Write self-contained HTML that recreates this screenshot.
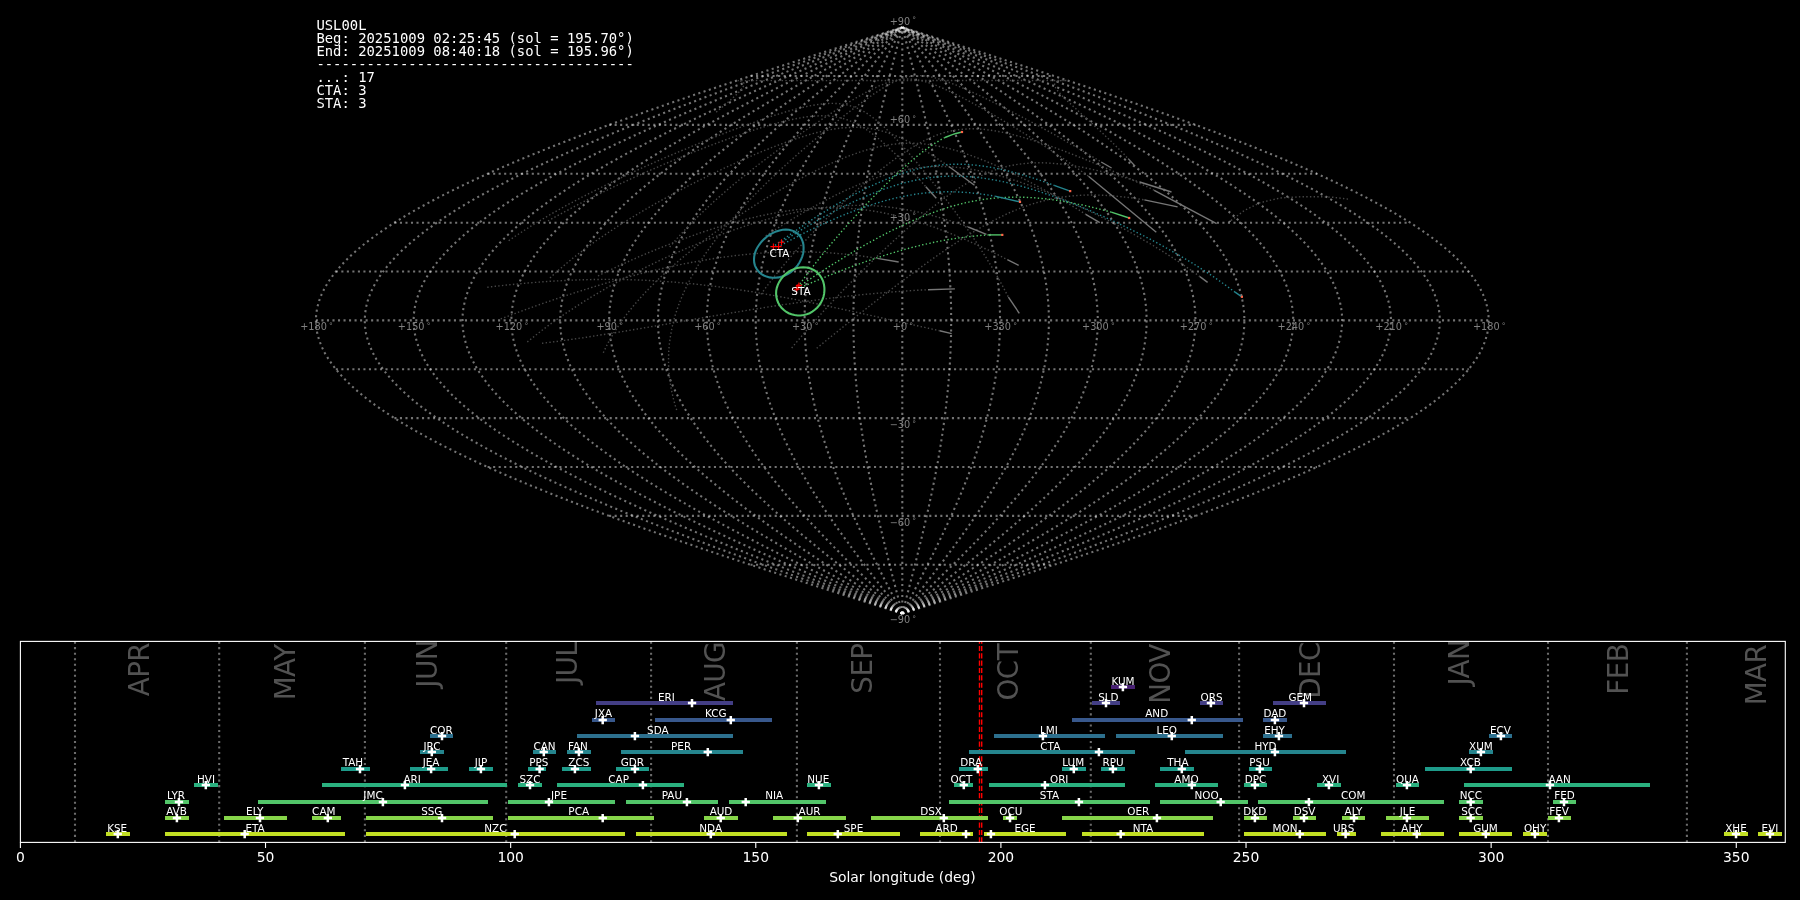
<!DOCTYPE html>
<html><head><meta charset="utf-8"><title>Shower association</title>
<style>
html,body{margin:0;padding:0;background:#000;}
body{width:1800px;height:900px;overflow:hidden;}
svg{display:block;will-change:transform;font-family:"DejaVu Sans","Liberation Sans",sans-serif;}
</style></head><body>
<svg width="1800" height="900" viewBox="0 0 1800 900">
<rect width="1800" height="900" fill="#000"/>
<g fill="none" stroke="#ffffff" stroke-opacity="0.45" stroke-width="2.08" stroke-dasharray="2.08 3.44">
<path d="M902.3 613.6 L922.8 607.1 L943.2 600.6 L963.6 594.1 L983.9 587.6 L1004.1 581.0 L1024.2 574.5 L1044.2 568.0 L1063.9 561.5 L1083.5 555.0 L1102.9 548.5 L1122.0 541.9 L1140.8 535.4 L1159.4 528.9 L1177.6 522.4 L1195.5 515.9 L1213.1 509.4 L1230.2 502.8 L1247.0 496.3 L1263.3 489.8 L1279.3 483.3 L1294.7 476.8 L1309.7 470.3 L1324.1 463.8 L1338.1 457.2 L1351.5 450.7 L1364.4 444.2 L1376.7 437.7 L1388.5 431.2 L1399.6 424.7 L1410.2 418.1 L1420.1 411.6 L1429.4 405.1 L1438.0 398.6 L1446.0 392.1 L1453.4 385.6 L1460.0 379.0 L1466.0 372.5 L1471.3 366.0 L1475.9 359.5 L1479.8 353.0 L1483.0 346.5 L1485.5 339.9 L1487.3 333.4 L1488.4 326.9 L1488.7 320.4 L1488.4 313.9 L1487.3 307.4 L1485.5 300.9 L1483.0 294.3 L1479.8 287.8 L1475.9 281.3 L1471.3 274.8 L1466.0 268.3 L1460.0 261.8 L1453.4 255.2 L1446.0 248.7 L1438.0 242.2 L1429.4 235.7 L1420.1 229.2 L1410.2 222.7 L1399.6 216.1 L1388.5 209.6 L1376.7 203.1 L1364.4 196.6 L1351.5 190.1 L1338.1 183.6 L1324.1 177.0 L1309.7 170.5 L1294.7 164.0 L1279.3 157.5 L1263.3 151.0 L1247.0 144.5 L1230.2 138.0 L1213.1 131.4 L1195.5 124.9 L1177.6 118.4 L1159.4 111.9 L1140.8 105.4 L1122.0 98.9 L1102.9 92.3 L1083.5 85.8 L1063.9 79.3 L1044.2 72.8 L1024.2 66.3 L1004.1 59.8 L983.9 53.2 L963.6 46.7 L943.2 40.2 L922.8 33.7 L902.3 27.2"/>
<path d="M902.3 613.6 L921.1 607.1 L939.8 600.6 L958.5 594.1 L977.1 587.6 L995.6 581.0 L1014.1 574.5 L1032.3 568.0 L1050.5 561.5 L1068.4 555.0 L1086.2 548.5 L1103.7 541.9 L1120.9 535.4 L1138.0 528.9 L1154.7 522.4 L1171.1 515.9 L1187.2 509.4 L1202.9 502.8 L1218.3 496.3 L1233.3 489.8 L1247.8 483.3 L1262.0 476.8 L1275.7 470.3 L1289.0 463.8 L1301.8 457.2 L1314.1 450.7 L1325.9 444.2 L1337.2 437.7 L1348.0 431.2 L1358.2 424.7 L1367.8 418.1 L1376.9 411.6 L1385.5 405.1 L1393.4 398.6 L1400.7 392.1 L1407.5 385.6 L1413.6 379.0 L1419.0 372.5 L1423.9 366.0 L1428.1 359.5 L1431.7 353.0 L1434.6 346.5 L1436.9 339.9 L1438.6 333.4 L1439.5 326.9 L1439.9 320.4 L1439.5 313.9 L1438.6 307.4 L1436.9 300.9 L1434.6 294.3 L1431.7 287.8 L1428.1 281.3 L1423.9 274.8 L1419.0 268.3 L1413.6 261.8 L1407.5 255.2 L1400.7 248.7 L1393.4 242.2 L1385.5 235.7 L1376.9 229.2 L1367.8 222.7 L1358.2 216.1 L1348.0 209.6 L1337.2 203.1 L1325.9 196.6 L1314.1 190.1 L1301.8 183.6 L1289.0 177.0 L1275.7 170.5 L1262.0 164.0 L1247.8 157.5 L1233.3 151.0 L1218.3 144.5 L1202.9 138.0 L1187.2 131.4 L1171.1 124.9 L1154.7 118.4 L1138.0 111.9 L1120.9 105.4 L1103.7 98.9 L1086.2 92.3 L1068.4 85.8 L1050.5 79.3 L1032.3 72.8 L1014.1 66.3 L995.6 59.8 L977.1 53.2 L958.5 46.7 L939.8 40.2 L921.1 33.7 L902.3 27.2"/>
<path d="M902.3 613.6 L919.4 607.1 L936.4 600.6 L953.4 594.1 L970.3 587.6 L987.2 581.0 L1003.9 574.5 L1020.5 568.0 L1037.0 561.5 L1053.3 555.0 L1069.4 548.5 L1085.4 541.9 L1101.1 535.4 L1116.5 528.9 L1131.7 522.4 L1146.7 515.9 L1161.3 509.4 L1175.6 502.8 L1189.6 496.3 L1203.2 489.8 L1216.4 483.3 L1229.3 476.8 L1241.8 470.3 L1253.8 463.8 L1265.5 457.2 L1276.7 450.7 L1287.4 444.2 L1297.7 437.7 L1307.5 431.2 L1316.7 424.7 L1325.5 418.1 L1333.8 411.6 L1341.5 405.1 L1348.7 398.6 L1355.4 392.1 L1361.5 385.6 L1367.1 379.0 L1372.1 372.5 L1376.5 366.0 L1380.3 359.5 L1383.6 353.0 L1386.2 346.5 L1388.3 339.9 L1389.8 333.4 L1390.7 326.9 L1391.0 320.4 L1390.7 313.9 L1389.8 307.4 L1388.3 300.9 L1386.2 294.3 L1383.6 287.8 L1380.3 281.3 L1376.5 274.8 L1372.1 268.3 L1367.1 261.8 L1361.5 255.2 L1355.4 248.7 L1348.7 242.2 L1341.5 235.7 L1333.8 229.2 L1325.5 222.7 L1316.7 216.1 L1307.5 209.6 L1297.7 203.1 L1287.4 196.6 L1276.7 190.1 L1265.5 183.6 L1253.8 177.0 L1241.8 170.5 L1229.3 164.0 L1216.4 157.5 L1203.2 151.0 L1189.6 144.5 L1175.6 138.0 L1161.3 131.4 L1146.7 124.9 L1131.7 118.4 L1116.5 111.9 L1101.1 105.4 L1085.4 98.9 L1069.4 92.3 L1053.3 85.8 L1037.0 79.3 L1020.5 72.8 L1003.9 66.3 L987.2 59.8 L970.3 53.2 L953.4 46.7 L936.4 40.2 L919.4 33.7 L902.3 27.2"/>
<path d="M902.3 613.6 L917.6 607.1 L933.0 600.6 L948.3 594.1 L963.5 587.6 L978.7 581.0 L993.7 574.5 L1008.7 568.0 L1023.5 561.5 L1038.2 555.0 L1052.7 548.5 L1067.1 541.9 L1081.2 535.4 L1095.1 528.9 L1108.8 522.4 L1122.2 515.9 L1135.4 509.4 L1148.2 502.8 L1160.8 496.3 L1173.1 489.8 L1185.0 483.3 L1196.6 476.8 L1207.8 470.3 L1218.7 463.8 L1229.2 457.2 L1239.2 450.7 L1248.9 444.2 L1258.1 437.7 L1266.9 431.2 L1275.3 424.7 L1283.2 418.1 L1290.6 411.6 L1297.6 405.1 L1304.1 398.6 L1310.1 392.1 L1315.6 385.6 L1320.6 379.0 L1325.1 372.5 L1329.1 366.0 L1332.5 359.5 L1335.4 353.0 L1337.8 346.5 L1339.7 339.9 L1341.1 333.4 L1341.9 326.9 L1342.1 320.4 L1341.9 313.9 L1341.1 307.4 L1339.7 300.9 L1337.8 294.3 L1335.4 287.8 L1332.5 281.3 L1329.1 274.8 L1325.1 268.3 L1320.6 261.8 L1315.6 255.2 L1310.1 248.7 L1304.1 242.2 L1297.6 235.7 L1290.6 229.2 L1283.2 222.7 L1275.3 216.1 L1266.9 209.6 L1258.1 203.1 L1248.9 196.6 L1239.2 190.1 L1229.2 183.6 L1218.7 177.0 L1207.8 170.5 L1196.6 164.0 L1185.0 157.5 L1173.1 151.0 L1160.8 144.5 L1148.2 138.0 L1135.4 131.4 L1122.2 124.9 L1108.8 118.4 L1095.1 111.9 L1081.2 105.4 L1067.1 98.9 L1052.7 92.3 L1038.2 85.8 L1023.5 79.3 L1008.7 72.8 L993.7 66.3 L978.7 59.8 L963.5 53.2 L948.3 46.7 L933.0 40.2 L917.6 33.7 L902.3 27.2"/>
<path d="M902.3 613.6 L915.9 607.1 L929.6 600.6 L943.2 594.1 L956.7 587.6 L970.2 581.0 L983.6 574.5 L996.9 568.0 L1010.1 561.5 L1023.1 555.0 L1036.0 548.5 L1048.8 541.9 L1061.3 535.4 L1073.7 528.9 L1085.8 522.4 L1097.8 515.9 L1109.5 509.4 L1120.9 502.8 L1132.1 496.3 L1143.0 489.8 L1153.6 483.3 L1163.9 476.8 L1173.9 470.3 L1183.5 463.8 L1192.8 457.2 L1201.8 450.7 L1210.4 444.2 L1218.6 437.7 L1226.4 431.2 L1233.9 424.7 L1240.9 418.1 L1247.5 411.6 L1253.7 405.1 L1259.5 398.6 L1264.8 392.1 L1269.7 385.6 L1274.1 379.0 L1278.1 372.5 L1281.6 366.0 L1284.7 359.5 L1287.3 353.0 L1289.5 346.5 L1291.1 339.9 L1292.3 333.4 L1293.0 326.9 L1293.3 320.4 L1293.0 313.9 L1292.3 307.4 L1291.1 300.9 L1289.5 294.3 L1287.3 287.8 L1284.7 281.3 L1281.6 274.8 L1278.1 268.3 L1274.1 261.8 L1269.7 255.2 L1264.8 248.7 L1259.5 242.2 L1253.7 235.7 L1247.5 229.2 L1240.9 222.7 L1233.9 216.1 L1226.4 209.6 L1218.6 203.1 L1210.4 196.6 L1201.8 190.1 L1192.8 183.6 L1183.5 177.0 L1173.9 170.5 L1163.9 164.0 L1153.6 157.5 L1143.0 151.0 L1132.1 144.5 L1120.9 138.0 L1109.5 131.4 L1097.8 124.9 L1085.8 118.4 L1073.7 111.9 L1061.3 105.4 L1048.8 98.9 L1036.0 92.3 L1023.1 85.8 L1010.1 79.3 L996.9 72.8 L983.6 66.3 L970.2 59.8 L956.7 53.2 L943.2 46.7 L929.6 40.2 L915.9 33.7 L902.3 27.2"/>
<path d="M902.3 613.6 L914.2 607.1 L926.2 600.6 L938.1 594.1 L949.9 587.6 L961.7 581.0 L973.4 574.5 L985.1 568.0 L996.6 561.5 L1008.0 555.0 L1019.3 548.5 L1030.4 541.9 L1041.4 535.4 L1052.3 528.9 L1062.9 522.4 L1073.3 515.9 L1083.6 509.4 L1093.6 502.8 L1103.4 496.3 L1112.9 489.8 L1122.2 483.3 L1131.2 476.8 L1139.9 470.3 L1148.4 463.8 L1156.5 457.2 L1164.4 450.7 L1171.9 444.2 L1179.1 437.7 L1185.9 431.2 L1192.4 424.7 L1198.6 418.1 L1204.3 411.6 L1209.8 405.1 L1214.8 398.6 L1219.5 392.1 L1223.8 385.6 L1227.6 379.0 L1231.1 372.5 L1234.2 366.0 L1236.9 359.5 L1239.2 353.0 L1241.1 346.5 L1242.5 339.9 L1243.6 333.4 L1244.2 326.9 L1244.4 320.4 L1244.2 313.9 L1243.6 307.4 L1242.5 300.9 L1241.1 294.3 L1239.2 287.8 L1236.9 281.3 L1234.2 274.8 L1231.1 268.3 L1227.6 261.8 L1223.8 255.2 L1219.5 248.7 L1214.8 242.2 L1209.8 235.7 L1204.3 229.2 L1198.6 222.7 L1192.4 216.1 L1185.9 209.6 L1179.1 203.1 L1171.9 196.6 L1164.4 190.1 L1156.5 183.6 L1148.4 177.0 L1139.9 170.5 L1131.2 164.0 L1122.2 157.5 L1112.9 151.0 L1103.4 144.5 L1093.6 138.0 L1083.6 131.4 L1073.3 124.9 L1062.9 118.4 L1052.3 111.9 L1041.4 105.4 L1030.4 98.9 L1019.3 92.3 L1008.0 85.8 L996.6 79.3 L985.1 72.8 L973.4 66.3 L961.7 59.8 L949.9 53.2 L938.1 46.7 L926.2 40.2 L914.2 33.7 L902.3 27.2"/>
<path d="M902.3 613.6 L912.5 607.1 L922.8 600.6 L932.9 594.1 L943.1 587.6 L953.2 581.0 L963.3 574.5 L973.2 568.0 L983.1 561.5 L992.9 555.0 L1002.6 548.5 L1012.1 541.9 L1021.6 535.4 L1030.8 528.9 L1040.0 522.4 L1048.9 515.9 L1057.7 509.4 L1066.3 502.8 L1074.7 496.3 L1082.8 489.8 L1090.8 483.3 L1098.5 476.8 L1106.0 470.3 L1113.2 463.8 L1120.2 457.2 L1126.9 450.7 L1133.4 444.2 L1139.5 437.7 L1145.4 431.2 L1151.0 424.7 L1156.2 418.1 L1161.2 411.6 L1165.8 405.1 L1170.2 398.6 L1174.2 392.1 L1177.8 385.6 L1181.2 379.0 L1184.2 372.5 L1186.8 366.0 L1189.1 359.5 L1191.1 353.0 L1192.7 346.5 L1193.9 339.9 L1194.8 333.4 L1195.3 326.9 L1195.5 320.4 L1195.3 313.9 L1194.8 307.4 L1193.9 300.9 L1192.7 294.3 L1191.1 287.8 L1189.1 281.3 L1186.8 274.8 L1184.2 268.3 L1181.2 261.8 L1177.8 255.2 L1174.2 248.7 L1170.2 242.2 L1165.8 235.7 L1161.2 229.2 L1156.2 222.7 L1151.0 216.1 L1145.4 209.6 L1139.5 203.1 L1133.4 196.6 L1126.9 190.1 L1120.2 183.6 L1113.2 177.0 L1106.0 170.5 L1098.5 164.0 L1090.8 157.5 L1082.8 151.0 L1074.7 144.5 L1066.3 138.0 L1057.7 131.4 L1048.9 124.9 L1040.0 118.4 L1030.8 111.9 L1021.6 105.4 L1012.1 98.9 L1002.6 92.3 L992.9 85.8 L983.1 79.3 L973.2 72.8 L963.3 66.3 L953.2 59.8 L943.1 53.2 L932.9 46.7 L922.8 40.2 L912.5 33.7 L902.3 27.2"/>
<path d="M902.3 613.6 L910.8 607.1 L919.3 600.6 L927.8 594.1 L936.3 587.6 L944.7 581.0 L953.1 574.5 L961.4 568.0 L969.7 561.5 L977.8 555.0 L985.9 548.5 L993.8 541.9 L1001.7 535.4 L1009.4 528.9 L1017.0 522.4 L1024.5 515.9 L1031.8 509.4 L1038.9 502.8 L1045.9 496.3 L1052.7 489.8 L1059.4 483.3 L1065.8 476.8 L1072.0 470.3 L1078.1 463.8 L1083.9 457.2 L1089.5 450.7 L1094.9 444.2 L1100.0 437.7 L1104.9 431.2 L1109.5 424.7 L1113.9 418.1 L1118.0 411.6 L1121.9 405.1 L1125.5 398.6 L1128.9 392.1 L1131.9 385.6 L1134.7 379.0 L1137.2 372.5 L1139.4 366.0 L1141.3 359.5 L1142.9 353.0 L1144.3 346.5 L1145.3 339.9 L1146.1 333.4 L1146.5 326.9 L1146.6 320.4 L1146.5 313.9 L1146.1 307.4 L1145.3 300.9 L1144.3 294.3 L1142.9 287.8 L1141.3 281.3 L1139.4 274.8 L1137.2 268.3 L1134.7 261.8 L1131.9 255.2 L1128.9 248.7 L1125.5 242.2 L1121.9 235.7 L1118.0 229.2 L1113.9 222.7 L1109.5 216.1 L1104.9 209.6 L1100.0 203.1 L1094.9 196.6 L1089.5 190.1 L1083.9 183.6 L1078.1 177.0 L1072.0 170.5 L1065.8 164.0 L1059.4 157.5 L1052.7 151.0 L1045.9 144.5 L1038.9 138.0 L1031.8 131.4 L1024.5 124.9 L1017.0 118.4 L1009.4 111.9 L1001.7 105.4 L993.8 98.9 L985.9 92.3 L977.8 85.8 L969.7 79.3 L961.4 72.8 L953.1 66.3 L944.7 59.8 L936.3 53.2 L927.8 46.7 L919.3 40.2 L910.8 33.7 L902.3 27.2"/>
<path d="M902.3 613.6 L909.1 607.1 L915.9 600.6 L922.7 594.1 L929.5 587.6 L936.2 581.0 L942.9 574.5 L949.6 568.0 L956.2 561.5 L962.7 555.0 L969.2 548.5 L975.5 541.9 L981.8 535.4 L988.0 528.9 L994.1 522.4 L1000.0 515.9 L1005.9 509.4 L1011.6 502.8 L1017.2 496.3 L1022.6 489.8 L1028.0 483.3 L1033.1 476.8 L1038.1 470.3 L1042.9 463.8 L1047.6 457.2 L1052.0 450.7 L1056.3 444.2 L1060.4 437.7 L1064.4 431.2 L1068.1 424.7 L1071.6 418.1 L1074.9 411.6 L1078.0 405.1 L1080.9 398.6 L1083.5 392.1 L1086.0 385.6 L1088.2 379.0 L1090.2 372.5 L1092.0 366.0 L1093.5 359.5 L1094.8 353.0 L1095.9 346.5 L1096.7 339.9 L1097.3 333.4 L1097.7 326.9 L1097.8 320.4 L1097.7 313.9 L1097.3 307.4 L1096.7 300.9 L1095.9 294.3 L1094.8 287.8 L1093.5 281.3 L1092.0 274.8 L1090.2 268.3 L1088.2 261.8 L1086.0 255.2 L1083.5 248.7 L1080.9 242.2 L1078.0 235.7 L1074.9 229.2 L1071.6 222.7 L1068.1 216.1 L1064.4 209.6 L1060.4 203.1 L1056.3 196.6 L1052.0 190.1 L1047.6 183.6 L1042.9 177.0 L1038.1 170.5 L1033.1 164.0 L1028.0 157.5 L1022.6 151.0 L1017.2 144.5 L1011.6 138.0 L1005.9 131.4 L1000.0 124.9 L994.1 118.4 L988.0 111.9 L981.8 105.4 L975.5 98.9 L969.2 92.3 L962.7 85.8 L956.2 79.3 L949.6 72.8 L942.9 66.3 L936.2 59.8 L929.5 53.2 L922.7 46.7 L915.9 40.2 L909.1 33.7 L902.3 27.2"/>
<path d="M902.3 613.6 L907.4 607.1 L912.5 600.6 L917.6 594.1 L922.7 587.6 L927.8 581.0 L932.8 574.5 L937.8 568.0 L942.7 561.5 L947.6 555.0 L952.4 548.5 L957.2 541.9 L961.9 535.4 L966.6 528.9 L971.1 522.4 L975.6 515.9 L980.0 509.4 L984.3 502.8 L988.5 496.3 L992.6 489.8 L996.5 483.3 L1000.4 476.8 L1004.1 470.3 L1007.8 463.8 L1011.3 457.2 L1014.6 450.7 L1017.8 444.2 L1020.9 437.7 L1023.8 431.2 L1026.6 424.7 L1029.3 418.1 L1031.7 411.6 L1034.1 405.1 L1036.2 398.6 L1038.2 392.1 L1040.1 385.6 L1041.7 379.0 L1043.2 372.5 L1044.6 366.0 L1045.7 359.5 L1046.7 353.0 L1047.5 346.5 L1048.1 339.9 L1048.6 333.4 L1048.8 326.9 L1048.9 320.4 L1048.8 313.9 L1048.6 307.4 L1048.1 300.9 L1047.5 294.3 L1046.7 287.8 L1045.7 281.3 L1044.6 274.8 L1043.2 268.3 L1041.7 261.8 L1040.1 255.2 L1038.2 248.7 L1036.2 242.2 L1034.1 235.7 L1031.7 229.2 L1029.3 222.7 L1026.6 216.1 L1023.8 209.6 L1020.9 203.1 L1017.8 196.6 L1014.6 190.1 L1011.3 183.6 L1007.8 177.0 L1004.1 170.5 L1000.4 164.0 L996.5 157.5 L992.6 151.0 L988.5 144.5 L984.3 138.0 L980.0 131.4 L975.6 124.9 L971.1 118.4 L966.6 111.9 L961.9 105.4 L957.2 98.9 L952.4 92.3 L947.6 85.8 L942.7 79.3 L937.8 72.8 L932.8 66.3 L927.8 59.8 L922.7 53.2 L917.6 46.7 L912.5 40.2 L907.4 33.7 L902.3 27.2"/>
<path d="M902.3 613.6 L905.7 607.1 L909.1 600.6 L912.5 594.1 L915.9 587.6 L919.3 581.0 L922.6 574.5 L925.9 568.0 L929.2 561.5 L932.5 555.0 L935.7 548.5 L938.9 541.9 L942.1 535.4 L945.1 528.9 L948.2 522.4 L951.2 515.9 L954.1 509.4 L957.0 502.8 L959.8 496.3 L962.5 489.8 L965.1 483.3 L967.7 476.8 L970.2 470.3 L972.6 463.8 L974.9 457.2 L977.2 450.7 L979.3 444.2 L981.4 437.7 L983.3 431.2 L985.2 424.7 L986.9 418.1 L988.6 411.6 L990.1 405.1 L991.6 398.6 L992.9 392.1 L994.1 385.6 L995.3 379.0 L996.3 372.5 L997.1 366.0 L997.9 359.5 L998.6 353.0 L999.1 346.5 L999.5 339.9 L999.8 333.4 L1000.0 326.9 L1000.0 320.4 L1000.0 313.9 L999.8 307.4 L999.5 300.9 L999.1 294.3 L998.6 287.8 L997.9 281.3 L997.1 274.8 L996.3 268.3 L995.3 261.8 L994.1 255.2 L992.9 248.7 L991.6 242.2 L990.1 235.7 L988.6 229.2 L986.9 222.7 L985.2 216.1 L983.3 209.6 L981.4 203.1 L979.3 196.6 L977.2 190.1 L974.9 183.6 L972.6 177.0 L970.2 170.5 L967.7 164.0 L965.1 157.5 L962.5 151.0 L959.8 144.5 L957.0 138.0 L954.1 131.4 L951.2 124.9 L948.2 118.4 L945.1 111.9 L942.1 105.4 L938.9 98.9 L935.7 92.3 L932.5 85.8 L929.2 79.3 L925.9 72.8 L922.6 66.3 L919.3 59.8 L915.9 53.2 L912.5 46.7 L909.1 40.2 L905.7 33.7 L902.3 27.2"/>
<path d="M902.3 613.6 L904.0 607.1 L905.7 600.6 L907.4 594.1 L909.1 587.6 L910.8 581.0 L912.5 574.5 L914.1 568.0 L915.8 561.5 L917.4 555.0 L919.0 548.5 L920.6 541.9 L922.2 535.4 L923.7 528.9 L925.2 522.4 L926.7 515.9 L928.2 509.4 L929.6 502.8 L931.0 496.3 L932.4 489.8 L933.7 483.3 L935.0 476.8 L936.2 470.3 L937.5 463.8 L938.6 457.2 L939.7 450.7 L940.8 444.2 L941.8 437.7 L942.8 431.2 L943.7 424.7 L944.6 418.1 L945.4 411.6 L946.2 405.1 L946.9 398.6 L947.6 392.1 L948.2 385.6 L948.8 379.0 L949.3 372.5 L949.7 366.0 L950.1 359.5 L950.4 353.0 L950.7 346.5 L950.9 339.9 L951.1 333.4 L951.1 326.9 L951.2 320.4 L951.1 313.9 L951.1 307.4 L950.9 300.9 L950.7 294.3 L950.4 287.8 L950.1 281.3 L949.7 274.8 L949.3 268.3 L948.8 261.8 L948.2 255.2 L947.6 248.7 L946.9 242.2 L946.2 235.7 L945.4 229.2 L944.6 222.7 L943.7 216.1 L942.8 209.6 L941.8 203.1 L940.8 196.6 L939.7 190.1 L938.6 183.6 L937.5 177.0 L936.2 170.5 L935.0 164.0 L933.7 157.5 L932.4 151.0 L931.0 144.5 L929.6 138.0 L928.2 131.4 L926.7 124.9 L925.2 118.4 L923.7 111.9 L922.2 105.4 L920.6 98.9 L919.0 92.3 L917.4 85.8 L915.8 79.3 L914.1 72.8 L912.5 66.3 L910.8 59.8 L909.1 53.2 L907.4 46.7 L905.7 40.2 L904.0 33.7 L902.3 27.2"/>
<path d="M902.3 613.6 L902.3 607.1 L902.3 600.6 L902.3 594.1 L902.3 587.6 L902.3 581.0 L902.3 574.5 L902.3 568.0 L902.3 561.5 L902.3 555.0 L902.3 548.5 L902.3 541.9 L902.3 535.4 L902.3 528.9 L902.3 522.4 L902.3 515.9 L902.3 509.4 L902.3 502.8 L902.3 496.3 L902.3 489.8 L902.3 483.3 L902.3 476.8 L902.3 470.3 L902.3 463.8 L902.3 457.2 L902.3 450.7 L902.3 444.2 L902.3 437.7 L902.3 431.2 L902.3 424.7 L902.3 418.1 L902.3 411.6 L902.3 405.1 L902.3 398.6 L902.3 392.1 L902.3 385.6 L902.3 379.0 L902.3 372.5 L902.3 366.0 L902.3 359.5 L902.3 353.0 L902.3 346.5 L902.3 339.9 L902.3 333.4 L902.3 326.9 L902.3 320.4 L902.3 313.9 L902.3 307.4 L902.3 300.9 L902.3 294.3 L902.3 287.8 L902.3 281.3 L902.3 274.8 L902.3 268.3 L902.3 261.8 L902.3 255.2 L902.3 248.7 L902.3 242.2 L902.3 235.7 L902.3 229.2 L902.3 222.7 L902.3 216.1 L902.3 209.6 L902.3 203.1 L902.3 196.6 L902.3 190.1 L902.3 183.6 L902.3 177.0 L902.3 170.5 L902.3 164.0 L902.3 157.5 L902.3 151.0 L902.3 144.5 L902.3 138.0 L902.3 131.4 L902.3 124.9 L902.3 118.4 L902.3 111.9 L902.3 105.4 L902.3 98.9 L902.3 92.3 L902.3 85.8 L902.3 79.3 L902.3 72.8 L902.3 66.3 L902.3 59.8 L902.3 53.2 L902.3 46.7 L902.3 40.2 L902.3 33.7 L902.3 27.2"/>
<path d="M902.3 613.6 L900.6 607.1 L898.9 600.6 L897.2 594.1 L895.5 587.6 L893.8 581.0 L892.1 574.5 L890.5 568.0 L888.8 561.5 L887.2 555.0 L885.6 548.5 L884.0 541.9 L882.4 535.4 L880.9 528.9 L879.4 522.4 L877.9 515.9 L876.4 509.4 L875.0 502.8 L873.6 496.3 L872.2 489.8 L870.9 483.3 L869.6 476.8 L868.4 470.3 L867.1 463.8 L866.0 457.2 L864.9 450.7 L863.8 444.2 L862.8 437.7 L861.8 431.2 L860.9 424.7 L860.0 418.1 L859.2 411.6 L858.4 405.1 L857.7 398.6 L857.0 392.1 L856.4 385.6 L855.8 379.0 L855.3 372.5 L854.9 366.0 L854.5 359.5 L854.2 353.0 L853.9 346.5 L853.7 339.9 L853.5 333.4 L853.5 326.9 L853.4 320.4 L853.5 313.9 L853.5 307.4 L853.7 300.9 L853.9 294.3 L854.2 287.8 L854.5 281.3 L854.9 274.8 L855.3 268.3 L855.8 261.8 L856.4 255.2 L857.0 248.7 L857.7 242.2 L858.4 235.7 L859.2 229.2 L860.0 222.7 L860.9 216.1 L861.8 209.6 L862.8 203.1 L863.8 196.6 L864.9 190.1 L866.0 183.6 L867.1 177.0 L868.4 170.5 L869.6 164.0 L870.9 157.5 L872.2 151.0 L873.6 144.5 L875.0 138.0 L876.4 131.4 L877.9 124.9 L879.4 118.4 L880.9 111.9 L882.4 105.4 L884.0 98.9 L885.6 92.3 L887.2 85.8 L888.8 79.3 L890.5 72.8 L892.1 66.3 L893.8 59.8 L895.5 53.2 L897.2 46.7 L898.9 40.2 L900.6 33.7 L902.3 27.2"/>
<path d="M902.3 613.6 L898.9 607.1 L895.5 600.6 L892.1 594.1 L888.7 587.6 L885.3 581.0 L882.0 574.5 L878.7 568.0 L875.4 561.5 L872.1 555.0 L868.9 548.5 L865.7 541.9 L862.5 535.4 L859.5 528.9 L856.4 522.4 L853.4 515.9 L850.5 509.4 L847.6 502.8 L844.8 496.3 L842.1 489.8 L839.5 483.3 L836.9 476.8 L834.4 470.3 L832.0 463.8 L829.7 457.2 L827.4 450.7 L825.3 444.2 L823.2 437.7 L821.3 431.2 L819.4 424.7 L817.7 418.1 L816.0 411.6 L814.5 405.1 L813.0 398.6 L811.7 392.1 L810.5 385.6 L809.3 379.0 L808.3 372.5 L807.5 366.0 L806.7 359.5 L806.0 353.0 L805.5 346.5 L805.1 339.9 L804.8 333.4 L804.6 326.9 L804.6 320.4 L804.6 313.9 L804.8 307.4 L805.1 300.9 L805.5 294.3 L806.0 287.8 L806.7 281.3 L807.5 274.8 L808.3 268.3 L809.3 261.8 L810.5 255.2 L811.7 248.7 L813.0 242.2 L814.5 235.7 L816.0 229.2 L817.7 222.7 L819.4 216.1 L821.3 209.6 L823.2 203.1 L825.3 196.6 L827.4 190.1 L829.7 183.6 L832.0 177.0 L834.4 170.5 L836.9 164.0 L839.5 157.5 L842.1 151.0 L844.8 144.5 L847.6 138.0 L850.5 131.4 L853.4 124.9 L856.4 118.4 L859.5 111.9 L862.5 105.4 L865.7 98.9 L868.9 92.3 L872.1 85.8 L875.4 79.3 L878.7 72.8 L882.0 66.3 L885.3 59.8 L888.7 53.2 L892.1 46.7 L895.5 40.2 L898.9 33.7 L902.3 27.2"/>
<path d="M902.3 613.6 L897.2 607.1 L892.1 600.6 L887.0 594.1 L881.9 587.6 L876.8 581.0 L871.8 574.5 L866.8 568.0 L861.9 561.5 L857.0 555.0 L852.2 548.5 L847.4 541.9 L842.7 535.4 L838.0 528.9 L833.5 522.4 L829.0 515.9 L824.6 509.4 L820.3 502.8 L816.1 496.3 L812.0 489.8 L808.1 483.3 L804.2 476.8 L800.5 470.3 L796.8 463.8 L793.3 457.2 L790.0 450.7 L786.8 444.2 L783.7 437.7 L780.8 431.2 L778.0 424.7 L775.3 418.1 L772.9 411.6 L770.5 405.1 L768.4 398.6 L766.4 392.1 L764.5 385.6 L762.9 379.0 L761.4 372.5 L760.0 366.0 L758.9 359.5 L757.9 353.0 L757.1 346.5 L756.5 339.9 L756.0 333.4 L755.8 326.9 L755.7 320.4 L755.8 313.9 L756.0 307.4 L756.5 300.9 L757.1 294.3 L757.9 287.8 L758.9 281.3 L760.0 274.8 L761.4 268.3 L762.9 261.8 L764.5 255.2 L766.4 248.7 L768.4 242.2 L770.5 235.7 L772.9 229.2 L775.3 222.7 L778.0 216.1 L780.8 209.6 L783.7 203.1 L786.8 196.6 L790.0 190.1 L793.3 183.6 L796.8 177.0 L800.5 170.5 L804.2 164.0 L808.1 157.5 L812.0 151.0 L816.1 144.5 L820.3 138.0 L824.6 131.4 L829.0 124.9 L833.5 118.4 L838.0 111.9 L842.7 105.4 L847.4 98.9 L852.2 92.3 L857.0 85.8 L861.9 79.3 L866.8 72.8 L871.8 66.3 L876.8 59.8 L881.9 53.2 L887.0 46.7 L892.1 40.2 L897.2 33.7 L902.3 27.2"/>
<path d="M902.3 613.6 L895.5 607.1 L888.7 600.6 L881.9 594.1 L875.1 587.6 L868.4 581.0 L861.7 574.5 L855.0 568.0 L848.4 561.5 L841.9 555.0 L835.4 548.5 L829.1 541.9 L822.8 535.4 L816.6 528.9 L810.5 522.4 L804.6 515.9 L798.7 509.4 L793.0 502.8 L787.4 496.3 L782.0 489.8 L776.6 483.3 L771.5 476.8 L766.5 470.3 L761.7 463.8 L757.0 457.2 L752.6 450.7 L748.3 444.2 L744.2 437.7 L740.2 431.2 L736.5 424.7 L733.0 418.1 L729.7 411.6 L726.6 405.1 L723.7 398.6 L721.1 392.1 L718.6 385.6 L716.4 379.0 L714.4 372.5 L712.6 366.0 L711.1 359.5 L709.8 353.0 L708.7 346.5 L707.9 339.9 L707.3 333.4 L706.9 326.9 L706.8 320.4 L706.9 313.9 L707.3 307.4 L707.9 300.9 L708.7 294.3 L709.8 287.8 L711.1 281.3 L712.6 274.8 L714.4 268.3 L716.4 261.8 L718.6 255.2 L721.1 248.7 L723.7 242.2 L726.6 235.7 L729.7 229.2 L733.0 222.7 L736.5 216.1 L740.2 209.6 L744.2 203.1 L748.3 196.6 L752.6 190.1 L757.0 183.6 L761.7 177.0 L766.5 170.5 L771.5 164.0 L776.6 157.5 L782.0 151.0 L787.4 144.5 L793.0 138.0 L798.7 131.4 L804.6 124.9 L810.5 118.4 L816.6 111.9 L822.8 105.4 L829.1 98.9 L835.4 92.3 L841.9 85.8 L848.4 79.3 L855.0 72.8 L861.7 66.3 L868.4 59.8 L875.1 53.2 L881.9 46.7 L888.7 40.2 L895.5 33.7 L902.3 27.2"/>
<path d="M902.3 613.6 L893.8 607.1 L885.3 600.6 L876.8 594.1 L868.3 587.6 L859.9 581.0 L851.5 574.5 L843.2 568.0 L834.9 561.5 L826.8 555.0 L818.7 548.5 L810.8 541.9 L802.9 535.4 L795.2 528.9 L787.6 522.4 L780.1 515.9 L772.8 509.4 L765.7 502.8 L758.7 496.3 L751.9 489.8 L745.2 483.3 L738.8 476.8 L732.6 470.3 L726.5 463.8 L720.7 457.2 L715.1 450.7 L709.7 444.2 L704.6 437.7 L699.7 431.2 L695.1 424.7 L690.7 418.1 L686.6 411.6 L682.7 405.1 L679.1 398.6 L675.7 392.1 L672.7 385.6 L669.9 379.0 L667.4 372.5 L665.2 366.0 L663.3 359.5 L661.7 353.0 L660.3 346.5 L659.3 339.9 L658.5 333.4 L658.1 326.9 L657.9 320.4 L658.1 313.9 L658.5 307.4 L659.3 300.9 L660.3 294.3 L661.7 287.8 L663.3 281.3 L665.2 274.8 L667.4 268.3 L669.9 261.8 L672.7 255.2 L675.7 248.7 L679.1 242.2 L682.7 235.7 L686.6 229.2 L690.7 222.7 L695.1 216.1 L699.7 209.6 L704.6 203.1 L709.7 196.6 L715.1 190.1 L720.7 183.6 L726.5 177.0 L732.6 170.5 L738.8 164.0 L745.2 157.5 L751.9 151.0 L758.7 144.5 L765.7 138.0 L772.8 131.4 L780.1 124.9 L787.6 118.4 L795.2 111.9 L802.9 105.4 L810.8 98.9 L818.7 92.3 L826.8 85.8 L834.9 79.3 L843.2 72.8 L851.5 66.3 L859.9 59.8 L868.3 53.2 L876.8 46.7 L885.3 40.2 L893.8 33.7 L902.3 27.2"/>
<path d="M902.3 613.6 L892.1 607.1 L881.8 600.6 L871.7 594.1 L861.5 587.6 L851.4 581.0 L841.3 574.5 L831.4 568.0 L821.5 561.5 L811.7 555.0 L802.0 548.5 L792.5 541.9 L783.0 535.4 L773.8 528.9 L764.6 522.4 L755.7 515.9 L746.9 509.4 L738.3 502.8 L729.9 496.3 L721.8 489.8 L713.8 483.3 L706.1 476.8 L698.6 470.3 L691.4 463.8 L684.4 457.2 L677.7 450.7 L671.2 444.2 L665.1 437.7 L659.2 431.2 L653.6 424.7 L648.4 418.1 L643.4 411.6 L638.8 405.1 L634.4 398.6 L630.4 392.1 L626.8 385.6 L623.4 379.0 L620.4 372.5 L617.8 366.0 L615.5 359.5 L613.5 353.0 L611.9 346.5 L610.7 339.9 L609.8 333.4 L609.3 326.9 L609.1 320.4 L609.3 313.9 L609.8 307.4 L610.7 300.9 L611.9 294.3 L613.5 287.8 L615.5 281.3 L617.8 274.8 L620.4 268.3 L623.4 261.8 L626.8 255.2 L630.4 248.7 L634.4 242.2 L638.8 235.7 L643.4 229.2 L648.4 222.7 L653.6 216.1 L659.2 209.6 L665.1 203.1 L671.2 196.6 L677.7 190.1 L684.4 183.6 L691.4 177.0 L698.6 170.5 L706.1 164.0 L713.8 157.5 L721.8 151.0 L729.9 144.5 L738.3 138.0 L746.9 131.4 L755.7 124.9 L764.6 118.4 L773.8 111.9 L783.0 105.4 L792.5 98.9 L802.0 92.3 L811.7 85.8 L821.5 79.3 L831.4 72.8 L841.3 66.3 L851.4 59.8 L861.5 53.2 L871.7 46.7 L881.8 40.2 L892.1 33.7 L902.3 27.2"/>
<path d="M902.3 613.6 L890.4 607.1 L878.4 600.6 L866.5 594.1 L854.7 587.6 L842.9 581.0 L831.2 574.5 L819.5 568.0 L808.0 561.5 L796.6 555.0 L785.3 548.5 L774.2 541.9 L763.2 535.4 L752.3 528.9 L741.7 522.4 L731.3 515.9 L721.0 509.4 L711.0 502.8 L701.2 496.3 L691.7 489.8 L682.4 483.3 L673.4 476.8 L664.7 470.3 L656.2 463.8 L648.1 457.2 L640.2 450.7 L632.7 444.2 L625.5 437.7 L618.7 431.2 L612.2 424.7 L606.0 418.1 L600.3 411.6 L594.8 405.1 L589.8 398.6 L585.1 392.1 L580.8 385.6 L577.0 379.0 L573.5 372.5 L570.4 366.0 L567.7 359.5 L565.4 353.0 L563.5 346.5 L562.1 339.9 L561.0 333.4 L560.4 326.9 L560.2 320.4 L560.4 313.9 L561.0 307.4 L562.1 300.9 L563.5 294.3 L565.4 287.8 L567.7 281.3 L570.4 274.8 L573.5 268.3 L577.0 261.8 L580.8 255.2 L585.1 248.7 L589.8 242.2 L594.8 235.7 L600.3 229.2 L606.0 222.7 L612.2 216.1 L618.7 209.6 L625.5 203.1 L632.7 196.6 L640.2 190.1 L648.1 183.6 L656.2 177.0 L664.7 170.5 L673.4 164.0 L682.4 157.5 L691.7 151.0 L701.2 144.5 L711.0 138.0 L721.0 131.4 L731.3 124.9 L741.7 118.4 L752.3 111.9 L763.2 105.4 L774.2 98.9 L785.3 92.3 L796.6 85.8 L808.0 79.3 L819.5 72.8 L831.2 66.3 L842.9 59.8 L854.7 53.2 L866.5 46.7 L878.4 40.2 L890.4 33.7 L902.3 27.2"/>
<path d="M902.3 613.6 L888.7 607.1 L875.0 600.6 L861.4 594.1 L847.9 587.6 L834.4 581.0 L821.0 574.5 L807.7 568.0 L794.5 561.5 L781.5 555.0 L768.6 548.5 L755.8 541.9 L743.3 535.4 L730.9 528.9 L718.8 522.4 L706.8 515.9 L695.1 509.4 L683.7 502.8 L672.5 496.3 L661.6 489.8 L651.0 483.3 L640.7 476.8 L630.7 470.3 L621.1 463.8 L611.8 457.2 L602.8 450.7 L594.2 444.2 L586.0 437.7 L578.2 431.2 L570.7 424.7 L563.7 418.1 L557.1 411.6 L550.9 405.1 L545.1 398.6 L539.8 392.1 L534.9 385.6 L530.5 379.0 L526.5 372.5 L523.0 366.0 L519.9 359.5 L517.3 353.0 L515.1 346.5 L513.5 339.9 L512.3 333.4 L511.6 326.9 L511.3 320.4 L511.6 313.9 L512.3 307.4 L513.5 300.9 L515.1 294.3 L517.3 287.8 L519.9 281.3 L523.0 274.8 L526.5 268.3 L530.5 261.8 L534.9 255.2 L539.8 248.7 L545.1 242.2 L550.9 235.7 L557.1 229.2 L563.7 222.7 L570.7 216.1 L578.2 209.6 L586.0 203.1 L594.2 196.6 L602.8 190.1 L611.8 183.6 L621.1 177.0 L630.7 170.5 L640.7 164.0 L651.0 157.5 L661.6 151.0 L672.5 144.5 L683.7 138.0 L695.1 131.4 L706.8 124.9 L718.8 118.4 L730.9 111.9 L743.3 105.4 L755.8 98.9 L768.6 92.3 L781.5 85.8 L794.5 79.3 L807.7 72.8 L821.0 66.3 L834.4 59.8 L847.9 53.2 L861.4 46.7 L875.0 40.2 L888.7 33.7 L902.3 27.2"/>
<path d="M902.3 613.6 L887.0 607.1 L871.6 600.6 L856.3 594.1 L841.1 587.6 L825.9 581.0 L810.9 574.5 L795.9 568.0 L781.1 561.5 L766.4 555.0 L751.9 548.5 L737.5 541.9 L723.4 535.4 L709.5 528.9 L695.8 522.4 L682.4 515.9 L669.2 509.4 L656.4 502.8 L643.8 496.3 L631.5 489.8 L619.6 483.3 L608.0 476.8 L596.8 470.3 L585.9 463.8 L575.4 457.2 L565.4 450.7 L555.7 444.2 L546.5 437.7 L537.7 431.2 L529.3 424.7 L521.4 418.1 L514.0 411.6 L507.0 405.1 L500.5 398.6 L494.5 392.1 L489.0 385.6 L484.0 379.0 L479.5 372.5 L475.5 366.0 L472.1 359.5 L469.2 353.0 L466.8 346.5 L464.9 339.9 L463.5 333.4 L462.7 326.9 L462.5 320.4 L462.7 313.9 L463.5 307.4 L464.9 300.9 L466.8 294.3 L469.2 287.8 L472.1 281.3 L475.5 274.8 L479.5 268.3 L484.0 261.8 L489.0 255.2 L494.5 248.7 L500.5 242.2 L507.0 235.7 L514.0 229.2 L521.4 222.7 L529.3 216.1 L537.7 209.6 L546.5 203.1 L555.7 196.6 L565.4 190.1 L575.4 183.6 L585.9 177.0 L596.8 170.5 L608.0 164.0 L619.6 157.5 L631.5 151.0 L643.8 144.5 L656.4 138.0 L669.2 131.4 L682.4 124.9 L695.8 118.4 L709.5 111.9 L723.4 105.4 L737.5 98.9 L751.9 92.3 L766.4 85.8 L781.1 79.3 L795.9 72.8 L810.9 66.3 L825.9 59.8 L841.1 53.2 L856.3 46.7 L871.6 40.2 L887.0 33.7 L902.3 27.2"/>
<path d="M902.3 613.6 L885.2 607.1 L868.2 600.6 L851.2 594.1 L834.3 587.6 L817.4 581.0 L800.7 574.5 L784.1 568.0 L767.6 561.5 L751.3 555.0 L735.2 548.5 L719.2 541.9 L703.5 535.4 L688.1 528.9 L672.9 522.4 L657.9 515.9 L643.3 509.4 L629.0 502.8 L615.0 496.3 L601.4 489.8 L588.2 483.3 L575.3 476.8 L562.8 470.3 L550.8 463.8 L539.1 457.2 L527.9 450.7 L517.2 444.2 L506.9 437.7 L497.1 431.2 L487.9 424.7 L479.1 418.1 L470.8 411.6 L463.1 405.1 L455.9 398.6 L449.2 392.1 L443.1 385.6 L437.5 379.0 L432.5 372.5 L428.1 366.0 L424.3 359.5 L421.0 353.0 L418.4 346.5 L416.3 339.9 L414.8 333.4 L413.9 326.9 L413.6 320.4 L413.9 313.9 L414.8 307.4 L416.3 300.9 L418.4 294.3 L421.0 287.8 L424.3 281.3 L428.1 274.8 L432.5 268.3 L437.5 261.8 L443.1 255.2 L449.2 248.7 L455.9 242.2 L463.1 235.7 L470.8 229.2 L479.1 222.7 L487.9 216.1 L497.1 209.6 L506.9 203.1 L517.2 196.6 L527.9 190.1 L539.1 183.6 L550.8 177.0 L562.8 170.5 L575.3 164.0 L588.2 157.5 L601.4 151.0 L615.0 144.5 L629.0 138.0 L643.3 131.4 L657.9 124.9 L672.9 118.4 L688.1 111.9 L703.5 105.4 L719.2 98.9 L735.2 92.3 L751.3 85.8 L767.6 79.3 L784.1 72.8 L800.7 66.3 L817.4 59.8 L834.3 53.2 L851.2 46.7 L868.2 40.2 L885.2 33.7 L902.3 27.2"/>
<path d="M902.3 613.6 L883.5 607.1 L864.8 600.6 L846.1 594.1 L827.5 587.6 L809.0 581.0 L790.5 574.5 L772.3 568.0 L754.1 561.5 L736.2 555.0 L718.4 548.5 L700.9 541.9 L683.7 535.4 L666.6 528.9 L649.9 522.4 L633.5 515.9 L617.4 509.4 L601.7 502.8 L586.3 496.3 L571.3 489.8 L556.8 483.3 L542.6 476.8 L528.9 470.3 L515.6 463.8 L502.8 457.2 L490.5 450.7 L478.7 444.2 L467.4 437.7 L456.6 431.2 L446.4 424.7 L436.8 418.1 L427.7 411.6 L419.1 405.1 L411.2 398.6 L403.9 392.1 L397.1 385.6 L391.0 379.0 L385.6 372.5 L380.7 366.0 L376.5 359.5 L372.9 353.0 L370.0 346.5 L367.7 339.9 L366.0 333.4 L365.1 326.9 L364.7 320.4 L365.1 313.9 L366.0 307.4 L367.7 300.9 L370.0 294.3 L372.9 287.8 L376.5 281.3 L380.7 274.8 L385.6 268.3 L391.0 261.8 L397.1 255.2 L403.9 248.7 L411.2 242.2 L419.1 235.7 L427.7 229.2 L436.8 222.7 L446.4 216.1 L456.6 209.6 L467.4 203.1 L478.7 196.6 L490.5 190.1 L502.8 183.6 L515.6 177.0 L528.9 170.5 L542.6 164.0 L556.8 157.5 L571.3 151.0 L586.3 144.5 L601.7 138.0 L617.4 131.4 L633.5 124.9 L649.9 118.4 L666.6 111.9 L683.7 105.4 L700.9 98.9 L718.4 92.3 L736.2 85.8 L754.1 79.3 L772.3 72.8 L790.5 66.3 L809.0 59.8 L827.5 53.2 L846.1 46.7 L864.8 40.2 L883.5 33.7 L902.3 27.2"/>
<path d="M902.3 613.6 L881.8 607.1 L861.4 600.6 L841.0 594.1 L820.7 587.6 L800.5 581.0 L780.4 574.5 L760.4 568.0 L740.7 561.5 L721.1 555.0 L701.7 548.5 L682.6 541.9 L663.8 535.4 L645.2 528.9 L627.0 522.4 L609.1 515.9 L591.5 509.4 L574.4 502.8 L557.6 496.3 L541.3 489.8 L525.3 483.3 L509.9 476.8 L494.9 470.3 L480.5 463.8 L466.5 457.2 L453.1 450.7 L440.2 444.2 L427.9 437.7 L416.1 431.2 L405.0 424.7 L394.4 418.1 L384.5 411.6 L375.2 405.1 L366.6 398.6 L358.6 392.1 L351.2 385.6 L344.6 379.0 L338.6 372.5 L333.3 366.0 L328.7 359.5 L324.8 353.0 L321.6 346.5 L319.1 339.9 L317.3 333.4 L316.2 326.9 L315.9 320.4 L316.2 313.9 L317.3 307.4 L319.1 300.9 L321.6 294.3 L324.8 287.8 L328.7 281.3 L333.3 274.8 L338.6 268.3 L344.6 261.8 L351.2 255.2 L358.6 248.7 L366.6 242.2 L375.2 235.7 L384.5 229.2 L394.4 222.7 L405.0 216.1 L416.1 209.6 L427.9 203.1 L440.2 196.6 L453.1 190.1 L466.5 183.6 L480.5 177.0 L494.9 170.5 L509.9 164.0 L525.3 157.5 L541.3 151.0 L557.6 144.5 L574.4 138.0 L591.5 131.4 L609.1 124.9 L627.0 118.4 L645.2 111.9 L663.8 105.4 L682.6 98.9 L701.7 92.3 L721.1 85.8 L740.7 79.3 L760.4 72.8 L780.4 66.3 L800.5 59.8 L820.7 53.2 L841.0 46.7 L861.4 40.2 L881.8 33.7 L902.3 27.2"/>
<path d="M750.5 564.8 L1054.1 564.8"/>
<path d="M609.1 515.9 L1195.5 515.9"/>
<path d="M487.6 467.0 L1317.0 467.0"/>
<path d="M394.4 418.1 L1410.2 418.1"/>
<path d="M335.8 369.3 L1468.8 369.3"/>
<path d="M315.9 320.4 L1488.7 320.4"/>
<path d="M335.8 271.5 L1468.8 271.5"/>
<path d="M394.4 222.7 L1410.2 222.7"/>
<path d="M487.6 173.8 L1317.0 173.8"/>
<path d="M609.1 124.9 L1195.5 124.9"/>
<path d="M750.5 76.0 L1054.1 76.0"/>
</g>
<g fill="none" stroke="#474747" stroke-width="1.39" stroke-dasharray="1.39 2.29">
<path d="M550.0 278.0 L552.6 275.5 L555.3 273.1 L558.1 270.6 L560.9 268.1 L563.8 265.7 L566.7 263.2 L569.7 260.8 L572.7 258.3 L575.8 255.9 L579.0 253.4 L582.2 251.0 L585.4 248.6 L588.7 246.1 L592.0 243.7 L595.4 241.3 L598.9 238.9 L602.4 236.5 L605.9 234.1 L609.5 231.7 L613.1 229.4 L616.7 227.0 L620.4 224.6 L624.1 222.3 L627.9 219.9 L631.7 217.6 L635.5 215.3 L639.4 213.0 L643.3 210.7 L647.2 208.4 L651.2 206.1 L655.1 203.8 L659.1 201.6 L663.2 199.4 L667.2 197.1 L671.3 194.9 L675.3 192.7 L679.4 190.6 L683.5 188.4 L687.7 186.2 L691.8 184.1 L695.9 182.0 L700.1 179.9 L704.2 177.9 L708.3 175.8 L712.5 173.8 L716.6 171.8 L720.8 169.8 L724.9 167.9 L729.0 166.0 L733.1 164.1 L737.3 162.2 L741.3 160.4 L745.4 158.6 L749.5 156.8 L753.5 155.1 L757.5 153.4 L761.5 151.7 L765.4 150.1 L769.4 148.5 L773.3 147.0 L777.1 145.5 L781.0 144.1 L784.8 142.7 L788.5 141.3 L792.3 140.0 L795.9 138.8 L799.6 137.6 L803.2 136.5 L806.7 135.4 L810.2 134.4 L813.7 133.4 L817.1 132.5 L820.5 131.7 L823.8 131.0 L827.1 130.3 L830.3 129.7 L833.5 129.1 L836.7 128.6 L839.8 128.2 L842.8 127.9 L845.9 127.7 L848.9 127.5 L851.8 127.4 L854.7 127.4 L857.6 127.4 L860.5 127.5 L863.3 127.7 L866.1 128.0 L868.9 128.4 L871.6 128.8 L874.4 129.3 L877.1 129.9 L879.8 130.5 L882.5 131.2 L885.2 132.0 L887.8 132.9 L890.5 133.8 L893.1 134.8 L895.8 135.8 L898.4 136.9 L901.1 138.0 L903.7 139.3 L906.4 140.5 L909.0 141.8 L911.7 143.2 L914.3 144.6 L917.0 146.1 L919.7 147.6 L922.3 149.1 L925.0 150.7 L927.7 152.4 L930.3 154.0 L933.0 155.7 L935.7 157.5 L938.4 159.3 L941.1 161.1 L943.8 162.9 L946.5 164.8 L949.2 166.7"/>
<path d="M548.0 221.0 L552.0 218.7 L556.0 216.5 L560.1 214.2 L564.2 212.0 L568.3 209.8 L572.5 207.5 L576.7 205.3 L580.9 203.1 L585.2 200.9 L589.5 198.7 L593.9 196.5 L598.3 194.4 L602.7 192.2 L607.1 190.1 L611.5 187.9 L616.0 185.8 L620.5 183.7 L625.0 181.6 L629.6 179.5 L634.1 177.4 L638.7 175.4 L643.2 173.3 L647.8 171.3 L652.4 169.3 L657.0 167.3 L661.6 165.3 L666.1 163.4 L670.7 161.4 L675.3 159.5 L679.9 157.6 L684.4 155.7 L689.0 153.9 L693.5 152.1 L698.0 150.3 L702.5 148.5 L707.0 146.8 L711.4 145.1 L715.9 143.4 L720.2 141.8 L724.6 140.2 L728.9 138.6 L733.2 137.0 L737.4 135.6 L741.6 134.1 L745.8 132.7 L749.9 131.3 L753.9 130.0 L757.9 128.7 L761.8 127.5 L765.7 126.3 L769.5 125.2 L773.3 124.1 L777.0 123.1 L780.6 122.2 L784.1 121.3 L787.6 120.4 L791.0 119.7 L794.4 119.0 L797.7 118.3 L800.9 117.8 L804.0 117.3 L807.0 116.8 L810.0 116.5 L813.0 116.2 L815.8 116.0 L818.6 115.9 L821.3 115.8 L824.0 115.8 L826.6 115.9 L829.1 116.1 L831.6 116.3 L834.0 116.6 L836.4 117.0 L838.7 117.5 L841.0 118.0 L843.3 118.6 L845.5 119.3 L847.6 120.0 L849.8 120.8 L851.9 121.6 L854.0 122.6 L856.0 123.5 L858.0 124.6 L860.0 125.7 L862.0 126.8 L864.0 128.0 L865.9 129.3 L867.9 130.6 L869.8 131.9 L871.7 133.3 L873.6 134.7 L875.5 136.2 L877.4 137.7 L879.3 139.3 L881.1 140.8 L883.0 142.5 L884.9 144.1 L886.8 145.8 L888.6 147.5 L890.5 149.3 L892.3 151.1 L894.2 152.9 L896.1 154.7 L897.9 156.5 L899.8 158.4 L901.6 160.3 L903.5 162.2 L905.4 164.2 L907.2 166.2 L909.1 168.1 L910.9 170.1 L912.8 172.2 L914.7 174.2 L916.5 176.2 L918.4 178.3 L920.2 180.4 L922.1 182.5 L923.9 184.6 L925.8 186.7"/>
<path d="M676.7 410.0 L675.4 405.9 L674.2 401.7 L673.1 397.6 L672.2 393.4 L671.3 389.3 L670.6 385.1 L669.9 381.0 L669.4 376.8 L669.0 372.7 L668.7 368.5 L668.6 364.4 L668.5 360.2 L668.6 356.0 L668.7 351.9 L669.0 347.7 L669.4 343.5 L670.0 339.4 L670.6 335.2 L671.4 331.0 L672.2 326.8 L673.2 322.7 L674.3 318.5 L675.5 314.3 L676.9 310.2 L678.3 306.0 L679.9 301.8 L681.5 297.7 L683.3 293.5 L685.2 289.3 L687.2 285.2 L689.3 281.0 L691.5 276.8 L693.8 272.7 L696.2 268.5 L698.7 264.3 L701.3 260.2 L704.0 256.0 L706.8 251.9 L709.7 247.7 L712.7 243.6 L715.8 239.4 L719.0 235.3 L722.3 231.2 L725.6 227.0 L729.1 222.9 L732.6 218.8 L736.2 214.7 L739.8 210.6 L743.6 206.5 L747.4 202.4 L751.3 198.3 L755.3 194.2 L759.3 190.1 L763.4 186.1 L767.5 182.0 L771.7 178.0 L776.0 174.0 L780.3 169.9 L784.6 165.9 L789.0 162.0 L793.5 158.0 L797.9 154.0 L802.4 150.1 L807.0 146.2 L811.5 142.3 L816.1 138.5 L820.7 134.6 L825.3 130.9 L829.9 127.1 L834.5 123.4 L839.1 119.7 L843.7 116.1 L848.3 112.6 L852.8 109.1 L857.4 105.7 L861.9 102.4 L866.3 99.2 L870.7 96.1 L875.1 93.1 L879.4 90.3 L883.7 87.6 L887.9 85.2 L892.1 82.9 L896.2 81.0 L900.3 79.2 L904.3 77.8 L908.4 76.7 L912.6 76.0 L916.8 75.6 L921.1 75.6 L925.6 76.0 L930.2 76.7 L935.0 77.8 L940.0 79.3 L945.3 81.0 L950.7 83.0 L956.3 85.2 L962.2 87.7 L968.2 90.3 L974.3 93.1 L980.6 96.1 L987.0 99.2 L993.6 102.4 L1000.2 105.7 L1006.8 109.1 L1013.6 112.6 L1020.4 116.2 L1027.2 119.8 L1034.0 123.4 L1040.8 127.1 L1047.6 130.9 L1054.5 134.7 L1061.3 138.5 L1068.0 142.4 L1074.8 146.2 L1081.5 150.2 L1088.1 154.1 L1094.7 158.0 L1101.2 162.0"/>
<path d="M716.2 112.1 L717.7 110.9 L719.1 109.7 L720.6 108.5 L722.0 107.3 L723.4 106.2 L724.7 105.0 L726.1 103.9 L727.4 102.8 L728.6 101.7 L729.9 100.6 L731.1 99.5 L732.3 98.5 L733.4 97.4 L734.5 96.4 L735.6 95.4 L736.6 94.5 L737.6 93.5 L738.5 92.6 L739.3 91.7 L740.1 90.8 L740.8 90.0 L741.5 89.2 L742.1 88.4 L742.6 87.6 L743.1 86.9 L743.4 86.2 L743.7 85.6 L743.9 84.9 L744.0 84.4 L744.0 83.8 L743.9 83.3 L743.6 82.8 L743.3 82.4 L742.9 82.0 L742.3 81.6 L741.6 81.3 L740.8 81.1 L739.9 80.9 L738.8 80.7 L737.6 80.6 L1066.7 80.5 L1065.0 80.5 L1063.4 80.5 L1062.0 80.5 L1060.7 80.6 L1059.5 80.8 L1058.5 81.0 L1057.6 81.2 L1056.8 81.5 L1056.2 81.8 L1055.6 82.2 L1055.2 82.6 L1054.9 83.0 L1054.7 83.5 L1054.6 84.1 L1054.6 84.6 L1054.6 85.2 L1054.8 85.9 L1055.0 86.6 L1055.4 87.3 L1055.8 88.0 L1056.3 88.8 L1056.8 89.6 L1057.4 90.4 L1058.1 91.3 L1058.8 92.1 L1059.6 93.1 L1060.5 94.0 L1061.3 94.9 L1062.3 95.9 L1063.3 96.9 L1064.3 97.9 L1065.3 99.0 L1066.4 100.0 L1067.5 101.1 L1068.7 102.2 L1069.9 103.3 L1071.1 104.4 L1072.3 105.6 L1073.6 106.7 L1074.9 107.9 L1076.2 109.1 L1077.5 110.3 L1078.8 111.5 L1080.2 112.7 L1081.5 114.0 L1082.9 115.2 L1084.3 116.4 L1085.7 117.7 L1087.1 119.0 L1088.5 120.3 L1089.9 121.5 L1091.3 122.8 L1092.8 124.1 L1094.2 125.5 L1095.6 126.8 L1097.1 128.1 L1098.5 129.4 L1100.0 130.8 L1101.4 132.1 L1102.9 133.5 L1104.3 134.8 L1105.7 136.2 L1107.2 137.6 L1108.6 138.9 L1110.1 140.3 L1111.5 141.7 L1112.9 143.1 L1114.3 144.5 L1115.8 145.9 L1117.2 147.3 L1118.6 148.7 L1120.0 150.1 L1121.4 151.5 L1122.7 152.9 L1124.1 154.3 L1125.5 155.7 L1126.8 157.2 L1128.2 158.6"/>
<path d="M669.7 247.0 L672.1 244.2 L674.6 241.3 L677.1 238.4 L679.7 235.5 L682.3 232.7 L685.0 229.8 L687.7 227.0 L690.4 224.1 L693.3 221.2 L696.1 218.4 L699.0 215.5 L702.0 212.7 L705.0 209.8 L708.0 207.0 L711.1 204.2 L714.2 201.3 L717.4 198.5 L720.6 195.7 L723.8 192.9 L727.1 190.0 L730.4 187.2 L733.7 184.4 L737.1 181.6 L740.5 178.8 L744.0 176.1 L747.4 173.3 L750.9 170.5 L754.5 167.7 L758.0 165.0 L761.6 162.2 L765.2 159.5 L768.8 156.8 L772.5 154.1 L776.1 151.4 L779.8 148.7 L783.5 146.0 L787.2 143.3 L790.9 140.7 L794.6 138.0 L798.3 135.4 L802.0 132.8 L805.8 130.2 L809.5 127.7 L813.2 125.2 L816.9 122.7 L820.7 120.2 L824.4 117.7 L828.1 115.3 L831.7 112.9 L835.4 110.6 L839.0 108.3 L842.7 106.0 L846.3 103.8 L849.8 101.6 L853.4 99.5 L856.8 97.5 L860.3 95.5 L863.7 93.6 L867.1 91.8 L870.5 90.1 L873.8 88.4 L877.0 86.9 L880.2 85.5 L883.4 84.2 L886.5 83.0 L889.6 82.0 L892.6 81.1 L895.7 80.4 L898.7 79.8 L901.7 79.4 L904.7 79.1 L907.7 79.0 L910.7 79.1 L913.8 79.4 L916.8 79.8 L920.0 80.4 L923.1 81.1 L926.4 82.0 L929.7 83.1 L933.0 84.3 L936.5 85.6 L939.9 87.0 L943.5 88.5 L947.1 90.2 L950.8 91.9 L954.5 93.7 L958.3 95.6 L962.2 97.6 L966.1 99.6 L970.0 101.7 L974.0 103.9 L978.0 106.1 L982.0 108.4 L986.1 110.7 L990.2 113.0 L994.3 115.4 L998.5 117.8 L1002.6 120.3 L1006.8 122.8 L1011.0 125.3 L1015.2 127.8 L1019.3 130.4 L1023.5 133.0 L1027.7 135.6 L1031.9 138.2 L1036.0 140.8 L1040.2 143.5 L1044.3 146.1 L1048.5 148.8 L1052.6 151.5 L1056.7 154.2 L1060.7 156.9 L1064.8 159.6 L1068.8 162.4 L1072.8 165.1 L1076.8 167.9 L1080.7 170.7 L1084.6 173.4 L1088.5 176.2"/>
<path d="M791.7 348.0 L793.8 345.4 L795.9 342.9 L798.1 340.3 L800.3 337.7 L802.5 335.1 L804.7 332.5 L806.9 329.9 L809.2 327.3 L811.4 324.7 L813.7 322.1 L816.0 319.6 L818.3 317.0 L820.7 314.4 L823.0 311.8 L825.4 309.2 L827.8 306.6 L830.2 304.0 L832.6 301.4 L835.0 298.8 L837.4 296.3 L839.9 293.7 L842.3 291.1 L844.8 288.6 L847.3 286.0 L849.8 283.4 L852.3 280.9 L854.8 278.4 L857.3 275.8 L859.8 273.3 L862.4 270.8 L864.9 268.3 L867.4 265.8 L870.0 263.3 L872.6 260.8 L875.1 258.3 L877.7 255.8 L880.2 253.4 L882.8 251.0 L885.4 248.5 L888.0 246.1 L890.6 243.7 L893.1 241.3 L895.7 239.0 L898.3 236.6 L900.9 234.3 L903.5 232.0 L906.0 229.7 L908.6 227.4 L911.2 225.1 L913.8 222.9 L916.4 220.7 L919.0 218.5 L921.5 216.3 L924.1 214.2 L926.7 212.0 L929.3 209.9 L931.8 207.9 L934.4 205.8 L937.0 203.8 L939.6 201.9 L942.1 199.9 L944.7 198.0 L947.3 196.1 L949.9 194.3 L952.5 192.5 L955.0 190.7 L957.6 189.0 L960.2 187.3 L962.8 185.7 L965.5 184.1 L968.1 182.5 L970.7 181.0 L973.4 179.6 L976.0 178.2 L978.7 176.8 L981.4 175.6 L984.1 174.3 L986.8 173.1 L989.6 172.0 L992.4 170.9 L995.2 169.9 L998.0 169.0 L1000.9 168.1 L1003.8 167.3 L1006.7 166.5 L1009.7 165.8 L1012.7 165.2 L1015.8 164.7 L1018.9 164.2 L1022.1 163.8 L1025.3 163.5 L1028.5 163.2 L1031.9 163.0 L1035.2 162.9 L1038.7 162.8 L1042.1 162.8 L1045.7 162.9 L1049.3 163.1 L1053.0 163.4 L1056.7 163.7 L1060.5 164.0 L1064.4 164.5 L1068.3 165.0 L1072.3 165.6 L1076.4 166.3 L1080.5 167.0 L1084.7 167.8 L1089.0 168.7 L1093.3 169.6 L1097.7 170.6 L1102.2 171.6 L1106.7 172.7 L1111.2 173.9 L1115.9 175.1 L1120.5 176.4 L1125.3 177.7 L1130.0 179.1 L1134.8 180.5 L1139.7 182.0"/>
<path d="M760.9 294.3 L763.0 291.5 L765.1 288.6 L767.2 285.8 L769.4 282.9 L771.6 280.1 L773.8 277.3 L776.0 274.4 L778.3 271.6 L780.6 268.8 L783.0 266.0 L785.3 263.2 L787.7 260.4 L790.1 257.6 L792.5 254.8 L795.0 252.0 L797.5 249.2 L800.0 246.5 L802.5 243.7 L805.0 241.0 L807.6 238.2 L810.2 235.5 L812.7 232.8 L815.4 230.1 L818.0 227.4 L820.6 224.7 L823.3 222.0 L825.9 219.3 L828.6 216.7 L831.3 214.0 L834.0 211.4 L836.7 208.8 L839.4 206.2 L842.2 203.6 L844.9 201.0 L847.7 198.5 L850.4 196.0 L853.2 193.5 L855.9 191.0 L858.7 188.5 L861.4 186.1 L864.2 183.7 L867.0 181.3 L869.7 179.0 L872.5 176.6 L875.3 174.3 L878.0 172.1 L880.8 169.8 L883.6 167.6 L886.3 165.5 L889.1 163.4 L891.9 161.3 L894.6 159.2 L897.4 157.2 L900.1 155.3 L902.9 153.4 L905.7 151.5 L908.4 149.8 L911.2 148.0 L913.9 146.3 L916.7 144.7 L919.5 143.2 L922.3 141.7 L925.0 140.2 L927.8 138.9 L930.7 137.6 L933.5 136.4 L936.3 135.3 L939.2 134.3 L942.1 133.3 L945.0 132.4 L948.0 131.7 L951.0 131.0 L954.0 130.4 L957.1 129.9 L960.2 129.5 L963.4 129.2 L966.6 129.0 L969.8 128.8 L973.2 128.8 L976.6 128.9 L980.0 129.1 L983.6 129.4 L987.1 129.8 L990.8 130.2 L994.5 130.8 L998.4 131.5 L1002.2 132.2 L1006.2 133.1 L1010.2 134.0 L1014.3 135.0 L1018.5 136.1 L1022.8 137.3 L1027.1 138.5 L1031.5 139.9 L1035.9 141.3 L1040.4 142.7 L1045.0 144.3 L1049.6 145.9 L1054.3 147.5 L1059.1 149.3 L1063.9 151.0 L1068.7 152.9 L1073.6 154.8 L1078.5 156.7 L1083.4 158.7 L1088.4 160.7 L1093.4 162.8 L1098.4 164.9 L1103.5 167.0 L1108.5 169.2 L1113.6 171.4 L1118.7 173.7 L1123.8 176.0 L1128.8 178.3 L1133.9 180.6 L1139.0 183.0 L1144.1 185.4 L1149.2 187.8 L1154.2 190.3"/>
<path d="M816.7 348.3 L819.1 346.3 L821.6 344.3 L824.0 342.3 L826.5 340.3 L829.0 338.3 L831.5 336.3 L834.0 334.3 L836.5 332.3 L839.0 330.3 L841.5 328.2 L844.0 326.2 L846.5 324.2 L849.1 322.2 L851.6 320.2 L854.2 318.1 L856.7 316.1 L859.3 314.1 L861.8 312.1 L864.4 310.1 L867.0 308.0 L869.5 306.0 L872.1 304.0 L874.7 302.0 L877.3 300.0 L879.9 298.0 L882.5 296.0 L885.1 294.0 L887.7 292.0 L890.3 290.1 L892.9 288.1 L895.5 286.1 L898.1 284.1 L900.7 282.2 L903.3 280.2 L905.9 278.3 L908.5 276.4 L911.1 274.4 L913.7 272.5 L916.3 270.6 L918.9 268.7 L921.4 266.9 L924.0 265.0 L926.6 263.1 L929.2 261.3 L931.8 259.4 L934.4 257.6 L937.0 255.8 L939.6 254.0 L942.1 252.2 L944.7 250.5 L947.3 248.7 L949.9 247.0 L952.4 245.3 L955.0 243.6 L957.6 241.9 L960.1 240.2 L962.7 238.6 L965.3 237.0 L967.8 235.4 L970.4 233.8 L972.9 232.2 L975.5 230.7 L978.0 229.2 L980.6 227.7 L983.2 226.2 L985.7 224.8 L988.3 223.3 L990.8 222.0 L993.4 220.6 L996.0 219.3 L998.5 218.0 L1001.1 216.7 L1003.7 215.4 L1006.3 214.2 L1008.9 213.0 L1011.5 211.9 L1014.1 210.7 L1016.7 209.7 L1019.3 208.6 L1022.0 207.6 L1024.6 206.6 L1027.3 205.7 L1030.0 204.7 L1032.7 203.9 L1035.4 203.0 L1038.1 202.2 L1040.9 201.5 L1043.6 200.8 L1046.4 200.1 L1049.2 199.4 L1052.1 198.8 L1054.9 198.3 L1057.8 197.8 L1060.7 197.3 L1063.6 196.9 L1066.6 196.5 L1069.6 196.2 L1072.6 195.9 L1075.7 195.6 L1078.8 195.4 L1081.9 195.2 L1085.0 195.1 L1088.2 195.0 L1091.5 195.0 L1094.7 195.0 L1098.0 195.1 L1101.4 195.2 L1104.7 195.3 L1108.1 195.5 L1111.6 195.8 L1115.1 196.1 L1118.6 196.4 L1122.2 196.8 L1125.8 197.2 L1129.4 197.6 L1133.1 198.1 L1136.8 198.7 L1140.6 199.3 L1144.4 199.9"/>
<path d="M603.3 352.7 L604.9 349.4 L606.5 346.0 L608.2 342.7 L610.1 339.3 L612.0 336.0 L614.0 332.6 L616.2 329.3 L618.4 325.9 L620.7 322.6 L623.0 319.2 L625.5 315.9 L628.1 312.5 L630.8 309.2 L633.5 305.8 L636.3 302.5 L639.3 299.1 L642.3 295.8 L645.3 292.4 L648.5 289.1 L651.7 285.8 L655.1 282.5 L658.5 279.1 L661.9 275.8 L665.5 272.5 L669.1 269.2 L672.8 266.0 L676.5 262.7 L680.4 259.4 L684.2 256.2 L688.2 253.0 L692.2 249.7 L696.2 246.5 L700.3 243.3 L704.5 240.1 L708.7 237.0 L713.0 233.8 L717.3 230.7 L721.6 227.6 L726.0 224.5 L730.4 221.5 L734.8 218.5 L739.3 215.4 L743.8 212.5 L748.3 209.5 L752.9 206.6 L757.4 203.7 L762.0 200.8 L766.6 198.0 L771.2 195.3 L775.8 192.5 L780.4 189.8 L785.1 187.2 L789.7 184.6 L794.3 182.0 L798.9 179.5 L803.5 177.0 L808.0 174.6 L812.6 172.3 L817.1 170.0 L821.6 167.8 L826.1 165.7 L830.6 163.7 L835.1 161.7 L839.5 159.8 L843.9 158.0 L848.3 156.2 L852.6 154.6 L856.9 153.1 L861.2 151.6 L865.5 150.3 L869.7 149.1 L873.9 148.0 L878.1 146.9 L882.3 146.1 L886.5 145.3 L890.6 144.6 L894.7 144.1 L898.9 143.7 L903.0 143.4 L907.1 143.3 L911.2 143.2 L915.4 143.3 L919.5 143.6 L923.7 143.9 L927.8 144.4 L932.1 145.0 L936.3 145.7 L940.5 146.6 L944.8 147.6 L949.2 148.6 L953.5 149.8 L957.9 151.1 L962.4 152.5 L966.8 154.0 L971.3 155.6 L975.9 157.3 L980.5 159.1 L985.1 160.9 L989.7 162.9 L994.4 164.9 L999.1 167.0 L1003.8 169.2 L1008.6 171.4 L1013.4 173.7 L1018.2 176.1 L1023.0 178.5 L1027.8 181.0 L1032.7 183.6 L1037.5 186.2 L1042.4 188.8 L1047.2 191.5 L1052.1 194.2 L1056.9 197.0 L1061.8 199.8 L1066.6 202.6 L1071.4 205.5 L1076.2 208.4 L1081.0 211.3 L1085.7 214.3"/>
<path d="M527.3 342.0 L529.9 339.9 L532.5 337.8 L535.2 335.6 L537.9 333.5 L540.6 331.4 L543.5 329.2 L546.3 327.1 L549.2 324.9 L552.2 322.8 L555.2 320.7 L558.2 318.5 L561.3 316.4 L564.4 314.2 L567.6 312.1 L570.8 310.0 L574.1 307.8 L577.4 305.7 L580.8 303.6 L584.1 301.4 L587.6 299.3 L591.0 297.2 L594.5 295.1 L598.1 293.0 L601.7 290.9 L605.3 288.8 L608.9 286.7 L612.6 284.7 L616.3 282.6 L620.1 280.6 L623.9 278.5 L627.7 276.5 L631.5 274.5 L635.4 272.5 L639.3 270.5 L643.2 268.6 L647.1 266.6 L651.1 264.7 L655.0 262.7 L659.0 260.8 L663.0 258.9 L667.1 257.1 L671.1 255.2 L675.2 253.4 L679.2 251.6 L683.3 249.8 L687.4 248.0 L691.5 246.3 L695.6 244.6 L699.7 242.9 L703.8 241.2 L707.9 239.6 L712.0 238.0 L716.2 236.4 L720.3 234.9 L724.4 233.3 L728.5 231.8 L732.6 230.4 L736.7 228.9 L740.8 227.6 L744.9 226.2 L749.0 224.9 L753.0 223.6 L757.1 222.3 L761.1 221.1 L765.2 219.9 L769.2 218.8 L773.2 217.7 L777.2 216.7 L781.2 215.7 L785.2 214.7 L789.1 213.8 L793.1 212.9 L797.0 212.0 L800.9 211.3 L804.8 210.5 L808.7 209.8 L812.5 209.2 L816.4 208.6 L820.2 208.0 L824.0 207.5 L827.8 207.1 L831.6 206.7 L835.4 206.3 L839.2 206.0 L842.9 205.8 L846.7 205.6 L850.4 205.5 L854.2 205.4 L857.9 205.3 L861.6 205.4 L865.3 205.4 L869.0 205.5 L872.6 205.7 L876.3 205.9 L880.0 206.2 L883.7 206.5 L887.3 206.9 L891.0 207.4 L894.6 207.8 L898.3 208.4 L902.0 208.9 L905.6 209.6 L909.3 210.2 L912.9 211.0 L916.6 211.7 L920.3 212.5 L923.9 213.4 L927.6 214.3 L931.3 215.3 L934.9 216.2 L938.6 217.3 L942.3 218.4 L946.0 219.5 L949.7 220.6 L953.4 221.8 L957.1 223.1 L960.8 224.3 L964.5 225.7 L968.2 227.0"/>
<path d="M598.0 276.0 L601.5 274.2 L605.1 272.5 L608.6 270.8 L612.2 269.0 L615.8 267.3 L619.4 265.6 L623.1 263.9 L626.7 262.3 L630.4 260.6 L634.1 259.0 L637.8 257.3 L641.5 255.7 L645.2 254.1 L648.9 252.5 L652.7 251.0 L656.4 249.4 L660.2 247.9 L663.9 246.4 L667.7 244.9 L671.5 243.4 L675.2 242.0 L679.0 240.6 L682.8 239.2 L686.5 237.8 L690.3 236.4 L694.1 235.1 L697.8 233.8 L701.6 232.5 L705.4 231.2 L709.1 230.0 L712.9 228.8 L716.6 227.6 L720.3 226.5 L724.1 225.3 L727.8 224.2 L731.5 223.2 L735.2 222.2 L738.9 221.2 L742.5 220.2 L746.2 219.2 L749.8 218.3 L753.5 217.5 L757.1 216.6 L760.7 215.8 L764.3 215.1 L767.8 214.3 L771.4 213.6 L775.0 213.0 L778.5 212.3 L782.0 211.8 L785.5 211.2 L789.0 210.7 L792.5 210.2 L795.9 209.8 L799.4 209.4 L802.8 209.1 L806.2 208.7 L809.6 208.5 L813.0 208.2 L816.4 208.0 L819.7 207.9 L823.1 207.8 L826.4 207.7 L829.8 207.7 L833.1 207.7 L836.4 207.7 L839.7 207.8 L843.0 207.9 L846.2 208.1 L849.5 208.3 L852.8 208.6 L856.0 208.9 L859.3 209.2 L862.5 209.6 L865.8 210.0 L869.0 210.4 L872.2 210.9 L875.4 211.4 L878.7 212.0 L881.9 212.6 L885.1 213.2 L888.3 213.9 L891.5 214.6 L894.7 215.4 L897.9 216.1 L901.1 217.0 L904.3 217.8 L907.6 218.7 L910.8 219.6 L914.0 220.6 L917.2 221.5 L920.4 222.6 L923.6 223.6 L926.8 224.7 L930.0 225.8 L933.3 226.9 L936.5 228.1 L939.7 229.3 L942.9 230.5 L946.1 231.7 L949.4 233.0 L952.6 234.3 L955.8 235.6 L959.0 237.0 L962.3 238.3 L965.5 239.7 L968.7 241.1 L971.9 242.6 L975.2 244.0 L978.4 245.5 L981.6 247.0 L984.8 248.5 L988.1 250.0 L991.3 251.6 L994.5 253.2 L997.7 254.7 L1000.9 256.3 L1004.1 258.0 L1007.3 259.6"/>
<path d="M542.0 343.3 L545.2 342.9 L548.3 342.5 L551.5 342.1 L554.7 341.7 L557.9 341.3 L561.0 340.8 L564.2 340.4 L567.4 340.0 L570.5 339.5 L573.7 339.1 L576.9 338.6 L580.1 338.1 L583.2 337.7 L586.4 337.2 L589.6 336.7 L592.8 336.2 L596.0 335.7 L599.2 335.2 L602.3 334.7 L605.5 334.2 L608.7 333.7 L611.9 333.2 L615.1 332.7 L618.3 332.2 L621.5 331.7 L624.7 331.1 L627.9 330.6 L631.1 330.1 L634.3 329.5 L637.5 329.0 L640.7 328.5 L643.9 327.9 L647.1 327.4 L650.4 326.8 L653.6 326.3 L656.8 325.7 L660.0 325.2 L663.2 324.6 L666.5 324.1 L669.7 323.5 L672.9 322.9 L676.1 322.4 L679.4 321.8 L682.6 321.3 L685.9 320.7 L689.1 320.1 L692.3 319.6 L695.6 319.0 L698.8 318.5 L702.1 317.9 L705.3 317.4 L708.6 316.8 L711.8 316.2 L715.1 315.7 L718.3 315.1 L721.6 314.6 L724.8 314.0 L728.1 313.5 L731.4 312.9 L734.6 312.4 L737.9 311.9 L741.2 311.3 L744.4 310.8 L747.7 310.3 L751.0 309.7 L754.2 309.2 L757.5 308.7 L760.8 308.2 L764.0 307.6 L767.3 307.1 L770.6 306.6 L773.9 306.1 L777.1 305.6 L780.4 305.1 L783.7 304.6 L787.0 304.1 L790.2 303.7 L793.5 303.2 L796.8 302.7 L800.1 302.3 L803.4 301.8 L806.6 301.3 L809.9 300.9 L813.2 300.5 L816.5 300.0 L819.8 299.6 L823.0 299.2 L826.3 298.7 L829.6 298.3 L832.9 297.9 L836.2 297.5 L839.4 297.2 L842.7 296.8 L846.0 296.4 L849.3 296.0 L852.6 295.7 L855.8 295.3 L859.1 295.0 L862.4 294.6 L865.7 294.3 L869.0 294.0 L872.2 293.7 L875.5 293.4 L878.8 293.1 L882.1 292.8 L885.4 292.5 L888.6 292.2 L891.9 292.0 L895.2 291.7 L898.5 291.5 L901.8 291.2 L905.0 291.0 L908.3 290.8 L911.6 290.6 L914.9 290.4 L918.2 290.2 L921.4 290.0 L924.7 289.9 L928.0 289.7"/>
<path d="M508.7 240.7 L513.9 237.1 L519.3 233.6 L524.8 230.0 L530.5 226.4 L536.2 222.9 L542.1 219.4 L548.1 215.8 L554.2 212.3 L560.4 208.8 L566.7 205.3 L573.1 201.9 L579.6 198.4 L586.2 195.0 L592.9 191.6 L599.7 188.2 L606.5 184.8 L613.4 181.4 L620.4 178.1 L627.4 174.8 L634.4 171.5 L641.5 168.2 L648.7 165.0 L655.8 161.8 L663.0 158.6 L670.2 155.5 L677.4 152.4 L684.6 149.4 L691.7 146.4 L698.9 143.4 L706.0 140.5 L713.1 137.7 L720.1 134.9 L727.1 132.2 L733.9 129.6 L740.7 127.1 L747.4 124.6 L754.0 122.3 L760.5 120.0 L766.8 117.8 L773.0 115.8 L779.1 113.9 L784.9 112.1 L790.6 110.5 L796.2 109.0 L801.5 107.7 L806.6 106.5 L811.6 105.5 L816.4 104.7 L820.9 104.1 L825.3 103.6 L829.5 103.4 L833.5 103.4 L837.4 103.5 L841.1 103.9 L844.6 104.4 L848.0 105.1 L851.3 106.1 L854.5 107.1 L857.6 108.4 L860.6 109.8 L863.6 111.4 L866.5 113.1 L869.3 115.0 L872.1 117.0 L874.9 119.1 L877.6 121.3 L880.3 123.6 L883.0 126.0 L885.7 128.5 L888.4 131.1 L891.1 133.8 L893.7 136.5 L896.4 139.3 L899.1 142.2 L901.7 145.1 L904.4 148.1 L907.1 151.1 L909.7 154.2 L912.4 157.3 L915.1 160.4 L917.7 163.6 L920.4 166.8 L923.0 170.1 L925.7 173.3 L928.3 176.6 L931.0 180.0 L933.6 183.3 L936.3 186.7 L938.9 190.1 L941.5 193.5 L944.1 196.9 L946.7 200.4 L949.3 203.8 L951.9 207.3 L954.4 210.8 L957.0 214.3 L959.5 217.8 L962.0 221.4 L964.5 224.9 L966.9 228.5 L969.4 232.0 L971.8 235.6 L974.2 239.2 L976.6 242.7 L978.9 246.3 L981.2 249.9 L983.5 253.5 L985.8 257.1 L988.0 260.8 L990.2 264.4 L992.4 268.0 L994.5 271.6 L996.6 275.3 L998.7 278.9 L1000.7 282.5 L1002.7 286.2 L1004.6 289.8 L1006.5 293.5 L1008.4 297.1"/>
<path d="M765.7 235.9 L769.1 233.7 L772.5 231.5 L775.9 229.3 L779.4 227.1 L782.8 225.0 L786.2 222.8 L789.7 220.7 L793.1 218.6 L796.6 216.5 L800.0 214.5 L803.5 212.5 L807.0 210.5 L810.4 208.5 L813.9 206.6 L817.4 204.7 L820.8 202.8 L824.3 201.0 L827.8 199.2 L831.2 197.4 L834.7 195.7 L838.1 194.0 L841.6 192.3 L845.0 190.7 L848.4 189.1 L851.9 187.6 L855.3 186.1 L858.7 184.6 L862.1 183.2 L865.5 181.9 L868.9 180.5 L872.3 179.3 L875.6 178.1 L879.0 176.9 L882.4 175.8 L885.7 174.8 L889.1 173.8 L892.4 172.9 L895.8 172.0 L899.1 171.2 L902.5 170.4 L905.8 169.8 L909.2 169.1 L912.5 168.6 L915.9 168.1 L919.2 167.7 L922.6 167.3 L926.0 167.0 L929.4 166.8 L932.8 166.6 L936.2 166.5 L939.6 166.5 L943.0 166.5 L946.4 166.6 L949.9 166.8 L953.4 167.0 L956.9 167.4 L960.4 167.7 L964.0 168.2 L967.5 168.7 L971.1 169.3 L974.7 169.9 L978.4 170.6 L982.0 171.4 L985.7 172.2 L989.4 173.1 L993.2 174.0 L997.0 175.0 L1000.7 176.1 L1004.6 177.2 L1008.4 178.3 L1012.3 179.6 L1016.2 180.8 L1020.1 182.1 L1024.0 183.5 L1028.0 184.9 L1031.9 186.4 L1035.9 187.9 L1039.9 189.4 L1044.0 191.0 L1048.0 192.7 L1052.1 194.3 L1056.1 196.0 L1060.2 197.8 L1064.3 199.6 L1068.4 201.4 L1072.5 203.2 L1076.6 205.1 L1080.7 207.0 L1084.8 208.9 L1088.9 210.9 L1093.0 212.9 L1097.1 214.9 L1101.2 217.0 L1105.3 219.0 L1109.4 221.1 L1113.4 223.3 L1117.5 225.4 L1121.5 227.6 L1125.6 229.8 L1129.6 232.0 L1133.5 234.2 L1137.5 236.4 L1141.4 238.7 L1145.3 241.0 L1149.2 243.2 L1153.1 245.5 L1156.9 247.9 L1160.7 250.2 L1164.5 252.5 L1168.2 254.9 L1171.9 257.3 L1175.5 259.7 L1179.1 262.0 L1182.7 264.4 L1186.2 266.9 L1189.7 269.3 L1193.2 271.7 L1196.6 274.2 L1199.9 276.6"/>
<path d="M500.7 318.9 L503.6 317.8 L506.6 316.7 L509.5 315.6 L512.5 314.4 L515.5 313.3 L518.5 312.2 L521.5 311.1 L524.5 310.0 L527.5 308.9 L530.6 307.8 L533.7 306.7 L536.7 305.6 L539.8 304.5 L542.9 303.4 L546.0 302.3 L549.1 301.3 L552.3 300.2 L555.4 299.1 L558.6 298.1 L561.7 297.0 L564.9 296.0 L568.1 294.9 L571.3 293.9 L574.5 292.8 L577.7 291.8 L580.9 290.8 L584.1 289.8 L587.3 288.8 L590.6 287.8 L593.8 286.8 L597.1 285.8 L600.3 284.8 L603.6 283.9 L606.8 282.9 L610.1 282.0 L613.4 281.1 L616.6 280.1 L619.9 279.2 L623.2 278.3 L626.5 277.4 L629.8 276.5 L633.1 275.7 L636.4 274.8 L639.6 274.0 L642.9 273.1 L646.2 272.3 L649.5 271.5 L652.8 270.7 L656.1 269.9 L659.4 269.2 L662.7 268.4 L666.0 267.7 L669.3 266.9 L672.6 266.2 L675.9 265.5 L679.1 264.9 L682.4 264.2 L685.7 263.5 L689.0 262.9 L692.2 262.3 L695.5 261.7 L698.8 261.1 L702.0 260.5 L705.3 260.0 L708.5 259.4 L711.8 258.9 L715.0 258.4 L718.3 257.9 L721.5 257.4 L724.7 257.0 L727.9 256.6 L731.2 256.1 L734.4 255.7 L737.6 255.4 L740.8 255.0 L744.0 254.7 L747.2 254.3 L750.4 254.0 L753.5 253.8 L756.7 253.5 L759.9 253.2 L763.0 253.0 L766.2 252.8 L769.4 252.6 L772.5 252.4 L775.6 252.3 L778.8 252.2 L781.9 252.1 L785.0 252.0 L788.2 251.9 L791.3 251.9 L794.4 251.8 L797.5 251.8 L800.6 251.8 L803.7 251.9 L806.8 251.9 L809.9 252.0 L813.0 252.1 L816.1 252.2 L819.2 252.3 L822.3 252.4 L825.3 252.6 L828.4 252.8 L831.5 253.0 L834.5 253.2 L837.6 253.5 L840.7 253.8 L843.7 254.0 L846.8 254.3 L849.9 254.7 L852.9 255.0 L856.0 255.4 L859.0 255.7 L862.1 256.1 L865.1 256.6 L868.2 257.0 L871.2 257.4 L874.3 257.9 L877.3 258.4"/>
<path d="M487.3 287.3 L491.3 286.8 L495.3 286.3 L499.3 285.9 L503.3 285.4 L507.3 285.0 L511.3 284.6 L515.3 284.2 L519.3 283.8 L523.3 283.4 L527.3 283.0 L531.2 282.7 L535.2 282.4 L539.2 282.1 L543.1 281.8 L547.1 281.5 L551.0 281.2 L555.0 281.0 L558.9 280.8 L562.8 280.6 L566.7 280.4 L570.7 280.2 L574.6 280.0 L578.5 279.9 L582.4 279.8 L586.2 279.7 L590.1 279.6 L594.0 279.5 L597.9 279.5 L601.7 279.4 L605.6 279.4 L609.4 279.4 L613.3 279.4 L617.1 279.5 L620.9 279.5 L624.8 279.6 L628.6 279.7 L632.4 279.8 L636.2 279.9 L640.0 280.1 L643.8 280.2 L647.6 280.4 L651.4 280.6 L655.2 280.8 L658.9 281.0 L662.7 281.3 L666.5 281.6 L670.2 281.8 L674.0 282.1 L677.8 282.4 L681.5 282.8 L685.3 283.1 L689.0 283.5 L692.8 283.8 L696.5 284.2 L700.2 284.6 L704.0 285.1 L707.7 285.5 L711.4 286.0 L715.2 286.4 L718.9 286.9 L722.6 287.4 L726.4 287.9 L730.1 288.4 L733.8 289.0 L737.6 289.5 L741.3 290.1 L745.0 290.7 L748.7 291.2 L752.5 291.8 L756.2 292.5 L759.9 293.1 L763.6 293.7 L767.4 294.4 L771.1 295.0 L774.8 295.7 L778.5 296.4 L782.3 297.1 L786.0 297.7 L789.7 298.5 L793.5 299.2 L797.2 299.9 L800.9 300.6 L804.7 301.4 L808.4 302.1 L812.1 302.9 L815.9 303.6 L819.6 304.4 L823.4 305.2 L827.1 306.0 L830.9 306.8 L834.6 307.6 L838.3 308.4 L842.1 309.2 L845.8 310.0 L849.6 310.8 L853.3 311.6 L857.1 312.4 L860.8 313.2 L864.6 314.1 L868.3 314.9 L872.1 315.7 L875.9 316.6 L879.6 317.4 L883.4 318.2 L887.1 319.1 L890.9 319.9 L894.6 320.7 L898.4 321.6 L902.1 322.4 L905.9 323.3 L909.7 324.1 L913.4 324.9 L917.2 325.8 L920.9 326.6 L924.7 327.4 L928.4 328.2 L932.2 329.1 L935.9 329.9 L939.7 330.7"/>
<path d="M1348.0 199.1 L1333.3 197.3 L1320.0 196.7 L1301.3 196.7 L1280.0 198.0 L1260.0 202.7 L1244.0 210.7 L1230.7 220.7"/>
</g>
<g fill="none" stroke="#767676" stroke-width="1.39">
<path d="M1230.7 220.7 L1228.6 222.4"/>
<path d="M949.2 166.7 L974.5 185.3"/>
<path d="M925.8 186.7 L936.3 198.3"/>
<path d="M1101.2 162.0 L1111.6 168.0"/>
<path d="M1128.2 158.6 L1135.1 166.1"/>
<path d="M1088.5 176.2 L1156.3 232.2"/>
<path d="M1139.7 182.0 L1171.5 192.0"/>
<path d="M1154.2 190.3 L1216.6 223.6"/>
<path d="M1144.4 199.9 L1177.6 206.9"/>
<path d="M1085.7 214.3 L1099.8 222.6"/>
<path d="M968.2 227.0 L986.4 234.3"/>
<path d="M1007.3 259.6 L1018.7 265.3"/>
<path d="M928.0 289.7 L954.9 288.9"/>
<path d="M1008.4 297.1 L1019.3 313.3"/>
<path d="M1199.9 276.6 L1207.6 282.4"/>
<path d="M877.3 258.4 L898.7 262.0"/>
<path d="M939.7 330.7 L951.7 333.6"/>
</g>
<path d="M945.0 137.5 L943.0 138.6 L941.0 139.6 L939.0 140.8 L937.1 142.0 L935.1 143.2 L933.1 144.4 L931.2 145.7 L929.3 147.1 L927.3 148.4 L925.4 149.8 L923.5 151.2 L921.5 152.7 L919.6 154.2 L917.7 155.7 L915.8 157.3 L913.9 158.8 L912.0 160.4 L910.0 162.1 L908.1 163.7 L906.2 165.4 L904.3 167.1 L902.4 168.8 L900.5 170.5 L898.6 172.3 L896.7 174.0 L894.8 175.8 L892.8 177.6 L890.9 179.5 L889.0 181.3 L887.1 183.2 L885.2 185.1 L883.3 186.9 L881.4 188.9 L879.5 190.8 L877.6 192.7 L875.6 194.6 L873.7 196.6 L871.8 198.6 L869.9 200.5 L868.0 202.5 L866.1 204.5 L864.3 206.5 L862.4 208.6 L860.5 210.6 L858.6 212.6 L856.7 214.7 L854.8 216.7 L853.0 218.8 L851.1 220.9 L849.2 222.9 L847.4 225.0 L845.5 227.1 L843.7 229.2 L841.8 231.3 L840.0 233.4 L838.2 235.6 L836.4 237.7 L834.6 239.8 L832.8 241.9 L831.0 244.1 L829.2 246.2 L827.4 248.4 L825.7 250.5 L823.9 252.7 L822.1 254.8 L820.4 257.0 L818.7 259.2 L817.0 261.3 L815.3 263.5 L813.6 265.7 L811.9 267.9 L810.2 270.0 L808.6 272.2 L806.9 274.4 L805.3 276.6 L803.7 278.8 L802.1 281.0 L800.5 283.2 L798.9 285.4" fill="none" stroke="#52c569" stroke-width="1.39" stroke-dasharray="1.39 2.29"/>
<path d="M1111.3 212.2 L1106.4 210.9 L1101.6 209.6 L1096.8 208.4 L1092.0 207.2 L1087.2 206.1 L1082.5 205.0 L1077.8 204.1 L1073.2 203.1 L1068.6 202.3 L1064.0 201.5 L1059.5 200.7 L1055.0 200.1 L1050.6 199.5 L1046.2 198.9 L1041.8 198.5 L1037.5 198.1 L1033.2 197.7 L1028.9 197.5 L1024.7 197.3 L1020.5 197.2 L1016.4 197.1 L1012.3 197.2 L1008.2 197.3 L1004.1 197.4 L1000.1 197.7 L996.1 198.0 L992.2 198.4 L988.2 198.8 L984.3 199.3 L980.4 199.9 L976.5 200.6 L972.7 201.3 L968.8 202.1 L965.0 202.9 L961.2 203.8 L957.4 204.8 L953.6 205.8 L949.8 206.9 L946.1 208.1 L942.3 209.3 L938.6 210.5 L934.8 211.9 L931.1 213.2 L927.3 214.7 L923.6 216.1 L919.9 217.7 L916.1 219.2 L912.4 220.9 L908.7 222.5 L904.9 224.2 L901.2 226.0 L897.5 227.8 L893.8 229.6 L890.0 231.5 L886.3 233.4 L882.6 235.4 L878.8 237.3 L875.1 239.4 L871.4 241.4 L867.6 243.5 L863.9 245.6 L860.2 247.7 L856.5 249.9 L852.8 252.1 L849.1 254.3 L845.4 256.5 L841.7 258.8 L838.0 261.1 L834.3 263.4 L830.6 265.7 L826.9 268.0 L823.3 270.4 L819.6 272.7 L816.0 275.1 L812.4 277.5 L808.7 280.0 L805.1 282.4 L801.6 284.8 L798.0 287.3" fill="none" stroke="#52c569" stroke-width="1.39" stroke-dasharray="1.39 2.29"/>
<path d="M988.9 234.9 L986.4 235.1 L983.9 235.2 L981.5 235.4 L979.0 235.6 L976.5 235.9 L974.1 236.1 L971.6 236.4 L969.1 236.6 L966.7 236.9 L964.2 237.2 L961.8 237.6 L959.3 237.9 L956.9 238.2 L954.4 238.6 L952.0 239.0 L949.5 239.4 L947.1 239.8 L944.6 240.2 L942.2 240.7 L939.8 241.2 L937.3 241.6 L934.9 242.1 L932.5 242.6 L930.0 243.2 L927.6 243.7 L925.2 244.2 L922.7 244.8 L920.3 245.4 L917.9 246.0 L915.4 246.6 L913.0 247.2 L910.6 247.8 L908.1 248.5 L905.7 249.1 L903.3 249.8 L900.9 250.5 L898.4 251.2 L896.0 251.9 L893.6 252.6 L891.1 253.3 L888.7 254.1 L886.3 254.8 L883.8 255.6 L881.4 256.4 L879.0 257.2 L876.6 257.9 L874.1 258.8 L871.7 259.6 L869.3 260.4 L866.8 261.2 L864.4 262.1 L862.0 263.0 L859.5 263.8 L857.1 264.7 L854.7 265.6 L852.3 266.5 L849.8 267.4 L847.4 268.3 L845.0 269.2 L842.5 270.2 L840.1 271.1 L837.7 272.1 L835.3 273.0 L832.8 274.0 L830.4 274.9 L828.0 275.9 L825.6 276.9 L823.2 277.9 L820.7 278.9 L818.3 279.9 L815.9 280.9 L813.5 281.9 L811.1 282.9 L808.7 284.0 L806.3 285.0 L803.9 286.1 L801.5 287.1 L799.1 288.1 L796.7 289.2" fill="none" stroke="#52c569" stroke-width="1.39" stroke-dasharray="1.39 2.29"/>
<path d="M1054.8 185.6 L1050.5 184.0 L1046.2 182.5 L1042.0 181.0 L1037.8 179.6 L1033.6 178.2 L1029.4 176.9 L1025.3 175.7 L1021.2 174.5 L1017.1 173.3 L1013.1 172.3 L1009.1 171.2 L1005.1 170.3 L1001.2 169.4 L997.3 168.6 L993.5 167.8 L989.6 167.1 L985.8 166.5 L982.1 166.0 L978.4 165.5 L974.7 165.1 L971.0 164.8 L967.4 164.5 L963.8 164.3 L960.2 164.2 L956.6 164.2 L953.1 164.3 L949.6 164.4 L946.1 164.6 L942.7 164.8 L939.2 165.2 L935.8 165.6 L932.4 166.1 L929.0 166.6 L925.6 167.2 L922.2 167.9 L918.8 168.7 L915.4 169.5 L912.1 170.4 L908.7 171.4 L905.3 172.4 L902.0 173.5 L898.6 174.6 L895.2 175.8 L891.9 177.1 L888.5 178.4 L885.1 179.8 L881.8 181.2 L878.4 182.7 L875.0 184.2 L871.6 185.8 L868.2 187.4 L864.8 189.1 L861.4 190.8 L858.0 192.6 L854.6 194.4 L851.2 196.2 L847.8 198.1 L844.4 200.0 L841.0 202.0 L837.5 203.9 L834.1 205.9 L830.7 208.0 L827.3 210.1 L823.9 212.2 L820.4 214.3 L817.0 216.5 L813.6 218.7 L810.2 220.9 L806.8 223.1 L803.4 225.4 L800.0 227.7 L796.7 230.0 L793.3 232.3 L790.0 234.6 L786.6 237.0 L783.3 239.4 L780.0 241.8 L776.7 244.2 L773.4 246.6" fill="none" stroke="#25858e" stroke-width="1.39" stroke-dasharray="1.39 2.29"/>
<path d="M995.9 196.4 L993.0 195.9 L990.1 195.4 L987.2 194.9 L984.3 194.5 L981.5 194.1 L978.6 193.7 L975.8 193.4 L972.9 193.1 L970.1 192.8 L967.3 192.5 L964.5 192.3 L961.7 192.2 L958.9 192.0 L956.1 191.9 L953.3 191.8 L950.6 191.8 L947.8 191.8 L945.1 191.8 L942.3 191.9 L939.6 192.0 L936.8 192.1 L934.1 192.3 L931.4 192.5 L928.7 192.7 L925.9 192.9 L923.2 193.2 L920.5 193.6 L917.8 193.9 L915.1 194.3 L912.4 194.7 L909.7 195.2 L907.0 195.7 L904.3 196.2 L901.6 196.7 L898.9 197.3 L896.2 197.9 L893.5 198.5 L890.8 199.2 L888.1 199.9 L885.4 200.6 L882.7 201.4 L880.0 202.2 L877.3 203.0 L874.5 203.8 L871.8 204.7 L869.1 205.5 L866.4 206.5 L863.7 207.4 L860.9 208.4 L858.2 209.3 L855.5 210.4 L852.7 211.4 L850.0 212.5 L847.3 213.5 L844.5 214.6 L841.8 215.8 L839.0 216.9 L836.3 218.1 L833.5 219.3 L830.8 220.5 L828.0 221.7 L825.3 222.9 L822.5 224.2 L819.8 225.5 L817.0 226.8 L814.3 228.1 L811.5 229.4 L808.8 230.8 L806.0 232.1 L803.3 233.5 L800.5 234.9 L797.8 236.3 L795.0 237.8 L792.3 239.2 L789.5 240.7 L786.8 242.1 L784.1 243.6 L781.3 245.1 L778.6 246.6" fill="none" stroke="#25858e" stroke-width="1.39" stroke-dasharray="1.39 2.29"/>
<path d="M1235.1 292.2 L1230.1 288.5 L1224.9 284.7 L1219.6 281.0 L1214.3 277.3 L1208.7 273.6 L1203.1 270.0 L1197.4 266.3 L1191.6 262.7 L1185.7 259.2 L1179.7 255.6 L1173.6 252.1 L1167.4 248.6 L1161.2 245.2 L1154.9 241.8 L1148.6 238.4 L1142.2 235.1 L1135.8 231.9 L1129.3 228.7 L1122.8 225.5 L1116.3 222.4 L1109.7 219.4 L1103.2 216.4 L1096.6 213.6 L1090.1 210.7 L1083.6 208.0 L1077.0 205.3 L1070.5 202.8 L1064.1 200.3 L1057.6 197.9 L1051.3 195.6 L1044.9 193.5 L1038.6 191.4 L1032.4 189.4 L1026.2 187.6 L1020.0 185.9 L1014.0 184.3 L1008.0 182.8 L1002.0 181.5 L996.1 180.3 L990.3 179.3 L984.6 178.4 L978.9 177.6 L973.2 177.0 L967.6 176.6 L962.1 176.3 L956.6 176.1 L951.2 176.1 L945.8 176.3 L940.4 176.6 L935.1 177.1 L929.8 177.7 L924.5 178.5 L919.2 179.4 L914.0 180.5 L908.7 181.7 L903.5 183.0 L898.2 184.5 L893.0 186.1 L887.7 187.9 L882.4 189.7 L877.2 191.7 L871.9 193.8 L866.6 196.0 L861.3 198.3 L856.0 200.7 L850.7 203.2 L845.3 205.7 L840.0 208.4 L834.7 211.2 L829.3 214.0 L824.0 216.9 L818.6 219.9 L813.3 222.9 L808.0 226.0 L802.6 229.1 L797.3 232.4 L792.0 235.6 L786.8 238.9 L781.5 242.3" fill="none" stroke="#25858e" stroke-width="1.39" stroke-dasharray="1.39 2.29"/>
<path d="M945 137.5 Q953.6 133.5 962 132" fill="none" stroke="#52c569" stroke-width="1.39"/>
<rect x="960.9" y="130.9" width="2.2" height="2.2" fill="#ff6347"/>
<path d="M1111.3 212.2 L1129.2 218.0" stroke="#52c569" stroke-width="1.39"/>
<rect x="1128.1" y="216.9" width="2.2" height="2.2" fill="#ff6347"/>
<path d="M988.9 234.9 L1002.3 234.9" stroke="#52c569" stroke-width="1.39"/>
<rect x="1001.2" y="233.8" width="2.2" height="2.2" fill="#ff6347"/>
<path d="M1054.8 185.6 L1070.2 191.1" stroke="#25858e" stroke-width="1.39"/>
<rect x="1069.1" y="190.0" width="2.2" height="2.2" fill="#ff6347"/>
<path d="M995.9 196.4 L1020.0 201.9" stroke="#25858e" stroke-width="1.39"/>
<rect x="1018.9" y="200.8" width="2.2" height="2.2" fill="#ff6347"/>
<path d="M1235.1 292.2 L1241.9 296.8" stroke="#25858e" stroke-width="1.39"/>
<rect x="1240.8" y="295.7" width="2.2" height="2.2" fill="#ff6347"/>
<path d="M795.9 285.4 h6 M798.9 282.4 v6" stroke="#ff0000" stroke-width="1.1"/>
<path d="M795.0 287.3 h6 M798.0 284.3 v6" stroke="#ff0000" stroke-width="1.1"/>
<path d="M793.7 289.2 h6 M796.7 286.2 v6" stroke="#ff0000" stroke-width="1.1"/>
<path d="M770.4 246.6 h6 M773.4 243.6 v6" stroke="#ff0000" stroke-width="1.1"/>
<path d="M775.6 246.6 h6 M778.6 243.6 v6" stroke="#ff0000" stroke-width="1.1"/>
<path d="M778.5 242.3 h6 M781.5 239.3 v6" stroke="#ff0000" stroke-width="1.1"/>
<path d="M785.9 229.6 L782.7 229.8 L779.5 230.4 L776.2 231.4 L773.0 232.9 L769.8 234.6 L766.8 236.7 L764.1 239.1 L761.5 241.7 L759.3 244.5 L757.4 247.4 L755.9 250.4 L754.8 253.5 L754.2 256.6 L754.0 259.6 L754.2 262.5 L754.9 265.3 L756.0 267.8 L757.5 270.2 L759.3 272.3 L761.5 274.1 L763.9 275.5 L766.6 276.6 L769.5 277.4 L772.5 277.8 L775.5 277.8 L778.7 277.4 L781.8 276.6 L784.8 275.5 L787.7 274.1 L790.5 272.3 L793.1 270.2 L795.5 267.8 L797.6 265.3 L799.5 262.5 L801.0 259.6 L802.2 256.6 L803.1 253.5 L803.5 250.4 L803.6 247.4 L803.4 244.5 L802.7 241.7 L801.7 239.1 L800.4 236.7 L798.6 234.6 L796.6 232.9 L794.3 231.4 L791.7 230.4 L788.9 229.8 L785.9 229.6Z" fill="none" stroke="#25858e" stroke-width="2.08"/>
<path d="M803.2 267.3 L800.1 267.5 L797.0 268.1 L793.9 269.1 L790.9 270.5 L788.1 272.2 L785.4 274.2 L783.1 276.5 L781.0 279.1 L779.2 281.9 L777.8 284.8 L776.8 287.8 L776.2 290.9 L776.1 293.9 L776.4 297.0 L777.1 299.9 L778.2 302.7 L779.6 305.3 L781.5 307.7 L783.6 309.8 L786.0 311.7 L788.7 313.2 L791.5 314.3 L794.5 315.1 L797.6 315.5 L800.6 315.5 L803.7 315.1 L806.7 314.3 L809.6 313.2 L812.3 311.7 L814.8 309.8 L817.1 307.7 L819.1 305.3 L820.9 302.7 L822.3 299.9 L823.4 297.0 L824.1 293.9 L824.4 290.9 L824.4 287.8 L824.0 284.8 L823.3 281.9 L822.2 279.1 L820.7 276.5 L818.9 274.2 L816.9 272.2 L814.5 270.5 L812.0 269.1 L809.2 268.1 L806.3 267.5 L803.2 267.3Z" fill="none" stroke="#52c569" stroke-width="2.08"/>
<text x="779.5" y="257.3" font-size="10.42" fill="#fff" text-anchor="middle">CTA</text>
<text x="801.0" y="295.0" font-size="10.42" fill="#fff" text-anchor="middle">STA</text>
<text x="1489.3" y="330.1" font-size="9.72" fill="#808080" text-anchor="middle">+180<tspan font-size="7.6" dy="-2.4" dx="2.2">°</tspan></text>
<text x="1391.6" y="330.1" font-size="9.72" fill="#808080" text-anchor="middle">+210<tspan font-size="7.6" dy="-2.4" dx="2.2">°</tspan></text>
<text x="1293.9" y="330.1" font-size="9.72" fill="#808080" text-anchor="middle">+240<tspan font-size="7.6" dy="-2.4" dx="2.2">°</tspan></text>
<text x="1196.1" y="330.1" font-size="9.72" fill="#808080" text-anchor="middle">+270<tspan font-size="7.6" dy="-2.4" dx="2.2">°</tspan></text>
<text x="1098.4" y="330.1" font-size="9.72" fill="#808080" text-anchor="middle">+300<tspan font-size="7.6" dy="-2.4" dx="2.2">°</tspan></text>
<text x="1000.6" y="330.1" font-size="9.72" fill="#808080" text-anchor="middle">+330<tspan font-size="7.6" dy="-2.4" dx="2.2">°</tspan></text>
<text x="902.9" y="330.1" font-size="9.72" fill="#808080" text-anchor="middle">+0<tspan font-size="7.6" dy="-2.4" dx="2.2">°</tspan></text>
<text x="805.2" y="330.1" font-size="9.72" fill="#808080" text-anchor="middle">+30<tspan font-size="7.6" dy="-2.4" dx="2.2">°</tspan></text>
<text x="707.4" y="330.1" font-size="9.72" fill="#808080" text-anchor="middle">+60<tspan font-size="7.6" dy="-2.4" dx="2.2">°</tspan></text>
<text x="609.7" y="330.1" font-size="9.72" fill="#808080" text-anchor="middle">+90<tspan font-size="7.6" dy="-2.4" dx="2.2">°</tspan></text>
<text x="511.9" y="330.1" font-size="9.72" fill="#808080" text-anchor="middle">+120<tspan font-size="7.6" dy="-2.4" dx="2.2">°</tspan></text>
<text x="414.2" y="330.1" font-size="9.72" fill="#808080" text-anchor="middle">+150<tspan font-size="7.6" dy="-2.4" dx="2.2">°</tspan></text>
<text x="316.5" y="330.1" font-size="9.72" fill="#808080" text-anchor="middle">+180<tspan font-size="7.6" dy="-2.4" dx="2.2">°</tspan></text>
<text x="902.9" y="220.8" font-size="9.72" fill="#808080" text-anchor="middle">+30<tspan font-size="7.6" dy="-2.4" dx="2.2">°</tspan></text>
<text x="902.9" y="123.0" font-size="9.72" fill="#808080" text-anchor="middle">+60<tspan font-size="7.6" dy="-2.4" dx="2.2">°</tspan></text>
<text x="902.9" y="24.8" font-size="9.72" fill="#808080" text-anchor="middle">+90<tspan font-size="7.6" dy="-2.4" dx="2.2">°</tspan></text>
<text x="902.9" y="427.9" font-size="9.72" fill="#808080" text-anchor="middle">−30<tspan font-size="7.6" dy="-2.4" dx="2.2">°</tspan></text>
<text x="902.9" y="525.7" font-size="9.72" fill="#808080" text-anchor="middle">−60<tspan font-size="7.6" dy="-2.4" dx="2.2">°</tspan></text>
<text x="902.9" y="623.4" font-size="9.72" fill="#808080" text-anchor="middle">−90<tspan font-size="7.6" dy="-2.4" dx="2.2">°</tspan></text>
<g font-family="'DejaVu Sans Mono', 'Liberation Mono', monospace" font-size="13.89" fill="#fff" style="white-space:pre">
<text x="316.4" y="29.80">USL00L</text>
<text x="316.4" y="42.84">Beg: 20251009 02:25:45 (sol = 195.70°)</text>
<text x="316.4" y="55.88">End: 20251009 08:40:18 (sol = 195.96°)</text>
<text x="316.4" y="68.92">--------------------------------------</text>
<text x="316.4" y="81.96">...: 17</text>
<text x="316.4" y="95.00">CTA: 3</text>
<text x="316.4" y="108.04">STA: 3</text>
</g>
<g stroke="#6c6c6c" stroke-width="2.08" stroke-dasharray="2.08 3.44">
<path d="M75.0 842.4 V641.4"/>
<path d="M219.2 842.4 V641.4"/>
<path d="M364.9 842.4 V641.4"/>
<path d="M506.2 842.4 V641.4"/>
<path d="M651.1 842.4 V641.4"/>
<path d="M796.9 842.4 V641.4"/>
<path d="M940.0 842.4 V641.4"/>
<path d="M1090.8 842.4 V641.4"/>
<path d="M1239.1 842.4 V641.4"/>
<path d="M1394.0 842.4 V641.4"/>
<path d="M1548.0 842.4 V641.4"/>
<path d="M1686.9 842.4 V641.4"/>
</g>
<text transform="translate(149.0 643.0) rotate(-90)" font-size="27.78" fill="#525252" letter-spacing="-0.6" text-anchor="end">APR</text>
<text transform="translate(295.0 644.4) rotate(-90)" font-size="27.78" fill="#525252" letter-spacing="-0.6" text-anchor="end">MAY</text>
<text transform="translate(436.7 640.2) rotate(-90)" font-size="27.78" fill="#525252" letter-spacing="-0.6" text-anchor="end">JUN</text>
<text transform="translate(576.7 641.8) rotate(-90)" font-size="27.78" fill="#525252" letter-spacing="-0.6" text-anchor="end">JUL</text>
<text transform="translate(724.7 642.0) rotate(-90)" font-size="27.78" fill="#525252" letter-spacing="-0.6" text-anchor="end">AUG</text>
<text transform="translate(872.2 643.5) rotate(-90)" font-size="27.78" fill="#525252" letter-spacing="-0.6" text-anchor="end">SEP</text>
<text transform="translate(1017.5 644.0) rotate(-90)" font-size="27.78" fill="#525252" letter-spacing="-0.6" text-anchor="end">OCT</text>
<text transform="translate(1170.0 644.4) rotate(-90)" font-size="27.78" fill="#525252" letter-spacing="-0.6" text-anchor="end">NOV</text>
<text transform="translate(1320.0 642.2) rotate(-90)" font-size="27.78" fill="#525252" letter-spacing="-0.6" text-anchor="end">DEC</text>
<text transform="translate(1469.3 639.9) rotate(-90)" font-size="27.78" fill="#525252" letter-spacing="-0.6" text-anchor="end">JAN</text>
<text transform="translate(1628.3 643.9) rotate(-90)" font-size="27.78" fill="#525252" letter-spacing="-0.6" text-anchor="end">FEB</text>
<text transform="translate(1766.0 644.9) rotate(-90)" font-size="27.78" fill="#525252" letter-spacing="-0.6" text-anchor="end">MAR</text>
<path d="M979.50 842.4 V641.4" stroke="#ff0000" stroke-width="1.39" stroke-dasharray="5.14 2.22"/>
<path d="M981.70 842.4 V641.4" stroke="#ff0000" stroke-width="1.39" stroke-dasharray="5.14 2.22"/>
<rect x="106" y="832" width="24" height="4" fill="#c2df23"/>
<rect x="165" y="832" width="180" height="4" fill="#c2df23"/>
<rect x="366" y="832" width="259" height="4" fill="#c2df23"/>
<rect x="636" y="832" width="151" height="4" fill="#c2df23"/>
<rect x="807" y="832" width="93" height="4" fill="#c2df23"/>
<rect x="920" y="832" width="53" height="4" fill="#c2df23"/>
<rect x="984" y="832" width="82" height="4" fill="#c2df23"/>
<rect x="1082" y="832" width="122" height="4" fill="#c2df23"/>
<rect x="1244" y="832" width="82" height="4" fill="#c2df23"/>
<rect x="1337" y="832" width="19" height="4" fill="#c2df23"/>
<rect x="1381" y="832" width="63" height="4" fill="#c2df23"/>
<rect x="1459" y="832" width="53" height="4" fill="#c2df23"/>
<rect x="1523" y="832" width="24" height="4" fill="#c2df23"/>
<rect x="1724" y="832" width="24" height="4" fill="#c2df23"/>
<rect x="1758" y="832" width="24" height="4" fill="#c2df23"/>
<rect x="165" y="816" width="24" height="4" fill="#86d549"/>
<rect x="224" y="816" width="63" height="4" fill="#86d549"/>
<rect x="312" y="816" width="29" height="4" fill="#86d549"/>
<rect x="366" y="816" width="127" height="4" fill="#86d549"/>
<rect x="508" y="816" width="146" height="4" fill="#86d549"/>
<rect x="704" y="816" width="34" height="4" fill="#86d549"/>
<rect x="773" y="816" width="73" height="4" fill="#86d549"/>
<rect x="871" y="816" width="117" height="4" fill="#86d549"/>
<rect x="1003" y="816" width="14" height="4" fill="#86d549"/>
<rect x="1062" y="816" width="151" height="4" fill="#86d549"/>
<rect x="1244" y="816" width="23" height="4" fill="#86d549"/>
<rect x="1293" y="816" width="23" height="4" fill="#86d549"/>
<rect x="1342" y="816" width="23" height="4" fill="#86d549"/>
<rect x="1386" y="816" width="43" height="4" fill="#86d549"/>
<rect x="1459" y="816" width="24" height="4" fill="#86d549"/>
<rect x="1548" y="816" width="23" height="4" fill="#86d549"/>
<rect x="165" y="800" width="24" height="4" fill="#52c569"/>
<rect x="258" y="800" width="230" height="4" fill="#52c569"/>
<rect x="508" y="800" width="107" height="4" fill="#52c569"/>
<rect x="626" y="800" width="92" height="4" fill="#52c569"/>
<rect x="729" y="800" width="97" height="4" fill="#52c569"/>
<rect x="949" y="800" width="201" height="4" fill="#52c569"/>
<rect x="1160" y="800" width="88" height="4" fill="#52c569"/>
<rect x="1258" y="800" width="186" height="4" fill="#52c569"/>
<rect x="1459" y="800" width="24" height="4" fill="#52c569"/>
<rect x="1553" y="800" width="23" height="4" fill="#52c569"/>
<rect x="194" y="783" width="24" height="4" fill="#2ab07f"/>
<rect x="322" y="783" width="185" height="4" fill="#2ab07f"/>
<rect x="518" y="783" width="24" height="4" fill="#2ab07f"/>
<rect x="557" y="783" width="127" height="4" fill="#2ab07f"/>
<rect x="807" y="783" width="24" height="4" fill="#2ab07f"/>
<rect x="954" y="783" width="19" height="4" fill="#2ab07f"/>
<rect x="989" y="783" width="136" height="4" fill="#2ab07f"/>
<rect x="1155" y="783" width="63" height="4" fill="#2ab07f"/>
<rect x="1244" y="783" width="23" height="4" fill="#2ab07f"/>
<rect x="1317" y="783" width="24" height="4" fill="#2ab07f"/>
<rect x="1396" y="783" width="23" height="4" fill="#2ab07f"/>
<rect x="1464" y="783" width="186" height="4" fill="#2ab07f"/>
<rect x="341" y="767" width="29" height="4" fill="#1e9b8a"/>
<rect x="410" y="767" width="38" height="4" fill="#1e9b8a"/>
<rect x="469" y="767" width="24" height="4" fill="#1e9b8a"/>
<rect x="528" y="767" width="18" height="4" fill="#1e9b8a"/>
<rect x="562" y="767" width="29" height="4" fill="#1e9b8a"/>
<rect x="616" y="767" width="33" height="4" fill="#1e9b8a"/>
<rect x="959" y="767" width="29" height="4" fill="#1e9b8a"/>
<rect x="1062" y="767" width="24" height="4" fill="#1e9b8a"/>
<rect x="1101" y="767" width="24" height="4" fill="#1e9b8a"/>
<rect x="1160" y="767" width="34" height="4" fill="#1e9b8a"/>
<rect x="1249" y="767" width="23" height="4" fill="#1e9b8a"/>
<rect x="1425" y="767" width="87" height="4" fill="#1e9b8a"/>
<rect x="420" y="750" width="24" height="4" fill="#25858e"/>
<rect x="533" y="750" width="23" height="4" fill="#25858e"/>
<rect x="567" y="750" width="24" height="4" fill="#25858e"/>
<rect x="621" y="750" width="122" height="4" fill="#25858e"/>
<rect x="969" y="750" width="166" height="4" fill="#25858e"/>
<rect x="1185" y="750" width="161" height="4" fill="#25858e"/>
<rect x="1469" y="750" width="24" height="4" fill="#25858e"/>
<rect x="430" y="734" width="23" height="4" fill="#2d708e"/>
<rect x="577" y="734" width="156" height="4" fill="#2d708e"/>
<rect x="994" y="734" width="111" height="4" fill="#2d708e"/>
<rect x="1116" y="734" width="107" height="4" fill="#2d708e"/>
<rect x="1263" y="734" width="29" height="4" fill="#2d708e"/>
<rect x="1489" y="734" width="23" height="4" fill="#2d708e"/>
<rect x="592" y="718" width="23" height="4" fill="#38588c"/>
<rect x="655" y="718" width="117" height="4" fill="#38588c"/>
<rect x="1072" y="718" width="171" height="4" fill="#38588c"/>
<rect x="1263" y="718" width="24" height="4" fill="#38588c"/>
<rect x="596" y="701" width="137" height="4" fill="#433e85"/>
<rect x="1092" y="701" width="28" height="4" fill="#433e85"/>
<rect x="1200" y="701" width="23" height="4" fill="#433e85"/>
<rect x="1273" y="701" width="53" height="4" fill="#433e85"/>
<rect x="1111" y="685" width="24" height="4" fill="#482173"/>
<g stroke="#fff" stroke-width="2.5">
<path d="M113.6 834.0 h8.3 M117.8 829.9 v8.3"/>
<path d="M240.5 834.0 h8.3 M244.7 829.9 v8.3"/>
<path d="M510.6 834.0 h8.3 M514.7 829.9 v8.3"/>
<path d="M706.6 834.0 h8.3 M710.8 829.9 v8.3"/>
<path d="M833.6 834.0 h8.3 M837.8 829.9 v8.3"/>
<path d="M961.9 834.0 h8.3 M966.0 829.9 v8.3"/>
<path d="M986.8 834.0 h8.3 M990.9 829.9 v8.3"/>
<path d="M1116.5 834.0 h8.3 M1120.7 829.9 v8.3"/>
<path d="M1295.6 834.0 h8.3 M1299.8 829.9 v8.3"/>
<path d="M1341.4 834.0 h8.3 M1345.6 829.9 v8.3"/>
<path d="M1412.5 834.0 h8.3 M1416.7 829.9 v8.3"/>
<path d="M1481.6 834.0 h8.3 M1485.8 829.9 v8.3"/>
<path d="M1530.8 834.0 h8.3 M1534.9 829.9 v8.3"/>
<path d="M1731.8 834.0 h8.3 M1736.0 829.9 v8.3"/>
<path d="M1765.8 834.0 h8.3 M1770.0 829.9 v8.3"/>
<path d="M172.8 818.0 h8.3 M176.9 813.9 v8.3"/>
<path d="M255.8 818.0 h8.3 M260.0 813.9 v8.3"/>
<path d="M323.7 818.0 h8.3 M327.8 813.9 v8.3"/>
<path d="M437.9 818.0 h8.3 M442.0 813.9 v8.3"/>
<path d="M598.6 818.0 h8.3 M602.7 813.9 v8.3"/>
<path d="M716.6 818.0 h8.3 M720.7 813.9 v8.3"/>
<path d="M793.6 818.0 h8.3 M797.8 813.9 v8.3"/>
<path d="M939.6 818.0 h8.3 M943.8 813.9 v8.3"/>
<path d="M1005.9 818.0 h8.3 M1010.0 813.9 v8.3"/>
<path d="M1152.8 818.0 h8.3 M1156.9 813.9 v8.3"/>
<path d="M1250.8 818.0 h8.3 M1254.9 813.9 v8.3"/>
<path d="M1299.8 818.0 h8.3 M1304.0 813.9 v8.3"/>
<path d="M1349.8 818.0 h8.3 M1354.0 813.9 v8.3"/>
<path d="M1402.8 818.0 h8.3 M1406.9 813.9 v8.3"/>
<path d="M1466.5 818.0 h8.3 M1470.7 813.9 v8.3"/>
<path d="M1554.8 818.0 h8.3 M1558.9 813.9 v8.3"/>
<path d="M174.8 802.0 h8.3 M178.9 797.9 v8.3"/>
<path d="M378.8 802.0 h8.3 M382.9 797.9 v8.3"/>
<path d="M544.8 802.0 h8.3 M548.9 797.9 v8.3"/>
<path d="M682.8 802.0 h8.3 M686.9 797.9 v8.3"/>
<path d="M741.6 802.0 h8.3 M745.7 797.9 v8.3"/>
<path d="M1074.8 802.0 h8.3 M1078.9 797.9 v8.3"/>
<path d="M1216.5 802.0 h8.3 M1220.7 797.9 v8.3"/>
<path d="M1304.8 802.0 h8.3 M1308.9 797.9 v8.3"/>
<path d="M1466.5 802.0 h8.3 M1470.7 797.9 v8.3"/>
<path d="M1559.8 802.0 h8.3 M1564.0 797.9 v8.3"/>
<path d="M201.7 785.0 h8.3 M205.8 780.9 v8.3"/>
<path d="M400.8 785.0 h8.3 M404.9 780.9 v8.3"/>
<path d="M525.9 785.0 h8.3 M530.0 780.9 v8.3"/>
<path d="M638.8 785.0 h8.3 M642.9 780.9 v8.3"/>
<path d="M814.8 785.0 h8.3 M818.9 780.9 v8.3"/>
<path d="M959.6 785.0 h8.3 M963.8 780.9 v8.3"/>
<path d="M1040.8 785.0 h8.3 M1044.9 780.9 v8.3"/>
<path d="M1187.6 785.0 h8.3 M1191.8 780.9 v8.3"/>
<path d="M1250.8 785.0 h8.3 M1254.9 780.9 v8.3"/>
<path d="M1324.8 785.0 h8.3 M1328.9 780.9 v8.3"/>
<path d="M1402.8 785.0 h8.3 M1406.9 780.9 v8.3"/>
<path d="M1545.8 785.0 h8.3 M1550.0 780.9 v8.3"/>
<path d="M355.9 769.0 h8.3 M360.0 764.9 v8.3"/>
<path d="M427.0 769.0 h8.3 M431.1 764.9 v8.3"/>
<path d="M476.8 769.0 h8.3 M480.9 764.9 v8.3"/>
<path d="M535.5 769.0 h8.3 M539.6 764.9 v8.3"/>
<path d="M570.8 769.0 h8.3 M574.9 764.9 v8.3"/>
<path d="M630.8 769.0 h8.3 M634.9 764.9 v8.3"/>
<path d="M973.6 769.0 h8.3 M977.8 764.9 v8.3"/>
<path d="M1069.6 769.0 h8.3 M1073.8 764.9 v8.3"/>
<path d="M1108.8 769.0 h8.3 M1112.9 764.9 v8.3"/>
<path d="M1177.6 769.0 h8.3 M1181.8 764.9 v8.3"/>
<path d="M1255.6 769.0 h8.3 M1259.8 764.9 v8.3"/>
<path d="M1466.5 769.0 h8.3 M1470.7 764.9 v8.3"/>
<path d="M427.7 752.0 h8.3 M431.8 747.9 v8.3"/>
<path d="M539.6 752.0 h8.3 M543.8 747.9 v8.3"/>
<path d="M574.8 752.0 h8.3 M578.9 747.9 v8.3"/>
<path d="M703.6 752.0 h8.3 M707.8 747.9 v8.3"/>
<path d="M1094.8 752.0 h8.3 M1098.9 747.9 v8.3"/>
<path d="M1270.8 752.0 h8.3 M1274.9 747.9 v8.3"/>
<path d="M1476.8 752.0 h8.3 M1480.9 747.9 v8.3"/>
<path d="M437.9 736.0 h8.3 M442.0 731.9 v8.3"/>
<path d="M630.8 736.0 h8.3 M634.9 731.9 v8.3"/>
<path d="M1038.8 736.0 h8.3 M1042.9 731.9 v8.3"/>
<path d="M1167.6 736.0 h8.3 M1171.8 731.9 v8.3"/>
<path d="M1274.8 736.0 h8.3 M1278.9 731.9 v8.3"/>
<path d="M1496.8 736.0 h8.3 M1500.9 731.9 v8.3"/>
<path d="M598.6 720.0 h8.3 M602.7 715.9 v8.3"/>
<path d="M726.6 720.0 h8.3 M730.8 715.9 v8.3"/>
<path d="M1187.6 720.0 h8.3 M1191.8 715.9 v8.3"/>
<path d="M1270.8 720.0 h8.3 M1274.9 715.9 v8.3"/>
<path d="M687.9 703.0 h8.3 M692.0 698.9 v8.3"/>
<path d="M1101.8 703.0 h8.3 M1106.0 698.9 v8.3"/>
<path d="M1206.8 703.0 h8.3 M1210.9 698.9 v8.3"/>
<path d="M1299.8 703.0 h8.3 M1304.0 698.9 v8.3"/>
<path d="M1118.8 687.0 h8.3 M1122.9 682.9 v8.3"/>
</g>
<g font-size="10.42" fill="#fff" text-anchor="middle">
<text x="117.2" y="831.6">KSE</text>
<text x="255.0" y="831.6">ETA</text>
<text x="495.4" y="831.6">NZC</text>
<text x="710.7" y="831.6">NDA</text>
<text x="853.5" y="831.6">SPE</text>
<text x="946.5" y="831.6">ARD</text>
<text x="1025.0" y="831.6">EGE</text>
<text x="1143.0" y="831.6">NTA</text>
<text x="1285.0" y="831.6">MON</text>
<text x="1343.7" y="831.6">URS</text>
<text x="1412.0" y="831.6">AHY</text>
<text x="1485.5" y="831.6">GUM</text>
<text x="1535.1" y="831.6">OHY</text>
<text x="1736.0" y="831.6">XHE</text>
<text x="1770.0" y="831.6">EVI</text>
<text x="176.5" y="815.3">AVB</text>
<text x="254.8" y="815.3">ELY</text>
<text x="323.8" y="815.3">CAM</text>
<text x="431.8" y="815.3">SSG</text>
<text x="578.7" y="815.3">PCA</text>
<text x="721.0" y="815.3">AUD</text>
<text x="809.5" y="815.3">AUR</text>
<text x="931.1" y="815.3">DSX</text>
<text x="1010.9" y="815.3">OCU</text>
<text x="1138.2" y="815.3">OER</text>
<text x="1254.8" y="815.3">DKD</text>
<text x="1304.5" y="815.3">DSV</text>
<text x="1353.5" y="815.3">ALY</text>
<text x="1407.5" y="815.3">JLE</text>
<text x="1471.8" y="815.3">SCC</text>
<text x="1559.0" y="815.3">FEV</text>
<text x="176.1" y="798.9">LYR</text>
<text x="373.0" y="798.9">JMC</text>
<text x="559.0" y="798.9">JPE</text>
<text x="671.9" y="798.9">PAU</text>
<text x="774.2" y="798.9">NIA</text>
<text x="1049.5" y="798.9">STA</text>
<text x="1206.6" y="798.9">NOO</text>
<text x="1353.3" y="798.9">COM</text>
<text x="1470.9" y="798.9">NCC</text>
<text x="1564.5" y="798.9">FED</text>
<text x="206.0" y="782.6">HVI</text>
<text x="412.1" y="782.6">ARI</text>
<text x="530.0" y="782.6">SZC</text>
<text x="618.6" y="782.6">CAP</text>
<text x="818.3" y="782.6">NUE</text>
<text x="961.4" y="782.6">OCT</text>
<text x="1059.2" y="782.6">ORI</text>
<text x="1186.5" y="782.6">AMO</text>
<text x="1255.5" y="782.6">DPC</text>
<text x="1330.6" y="782.6">XVI</text>
<text x="1407.5" y="782.6">QUA</text>
<text x="1559.6" y="782.6">AAN</text>
<text x="352.9" y="766.3">TAH</text>
<text x="431.1" y="766.3">JEA</text>
<text x="481.0" y="766.3">JIP</text>
<text x="538.8" y="766.3">PPS</text>
<text x="578.8" y="766.3">ZCS</text>
<text x="632.4" y="766.3">GDR</text>
<text x="971.2" y="766.3">DRA</text>
<text x="1073.2" y="766.3">LUM</text>
<text x="1113.0" y="766.3">RPU</text>
<text x="1177.9" y="766.3">THA</text>
<text x="1259.5" y="766.3">PSU</text>
<text x="1470.5" y="766.3">XCB</text>
<text x="431.9" y="750.0">JRC</text>
<text x="544.5" y="750.0">CAN</text>
<text x="577.9" y="750.0">FAN</text>
<text x="681.1" y="750.0">PER</text>
<text x="1050.3" y="750.0">CTA</text>
<text x="1265.5" y="750.0">HYD</text>
<text x="1480.9" y="750.0">XUM</text>
<text x="441.4" y="733.6">COR</text>
<text x="657.9" y="733.6">SDA</text>
<text x="1049.0" y="733.6">LMI</text>
<text x="1166.7" y="733.6">LEO</text>
<text x="1274.6" y="733.6">EHY</text>
<text x="1500.5" y="733.6">ECV</text>
<text x="603.5" y="717.3">JXA</text>
<text x="715.9" y="717.3">KCG</text>
<text x="1156.7" y="717.3">AND</text>
<text x="1274.9" y="717.3">DAD</text>
<text x="666.4" y="701.0">ERI</text>
<text x="1108.4" y="701.0">SLD</text>
<text x="1211.5" y="701.0">ORS</text>
<text x="1300.2" y="701.0">GEM</text>
<text x="1123.0" y="684.6">KUM</text>
</g>
<rect x="20.4" y="641.4" width="1764.9" height="201.0" fill="none" stroke="#fff" stroke-width="1.11"/>
<g font-size="13.89" fill="#fff" text-anchor="middle">
<path d="M20.40 842.4 v5.6" stroke="#fff" stroke-width="1.11"/>
<text x="20.40" y="862.3">0</text>
<path d="M265.52 842.4 v5.6" stroke="#fff" stroke-width="1.11"/>
<text x="265.52" y="862.3">50</text>
<path d="M510.65 842.4 v5.6" stroke="#fff" stroke-width="1.11"/>
<text x="510.65" y="862.3">100</text>
<path d="M755.77 842.4 v5.6" stroke="#fff" stroke-width="1.11"/>
<text x="755.77" y="862.3">150</text>
<path d="M1000.90 842.4 v5.6" stroke="#fff" stroke-width="1.11"/>
<text x="1000.90" y="862.3">200</text>
<path d="M1246.03 842.4 v5.6" stroke="#fff" stroke-width="1.11"/>
<text x="1246.03" y="862.3">250</text>
<path d="M1491.15 842.4 v5.6" stroke="#fff" stroke-width="1.11"/>
<text x="1491.15" y="862.3">300</text>
<path d="M1736.28 842.4 v5.6" stroke="#fff" stroke-width="1.11"/>
<text x="1736.28" y="862.3">350</text>
<text x="902.5" y="881.9">Solar longitude (deg)</text>
</g>
</svg>
</body></html>
